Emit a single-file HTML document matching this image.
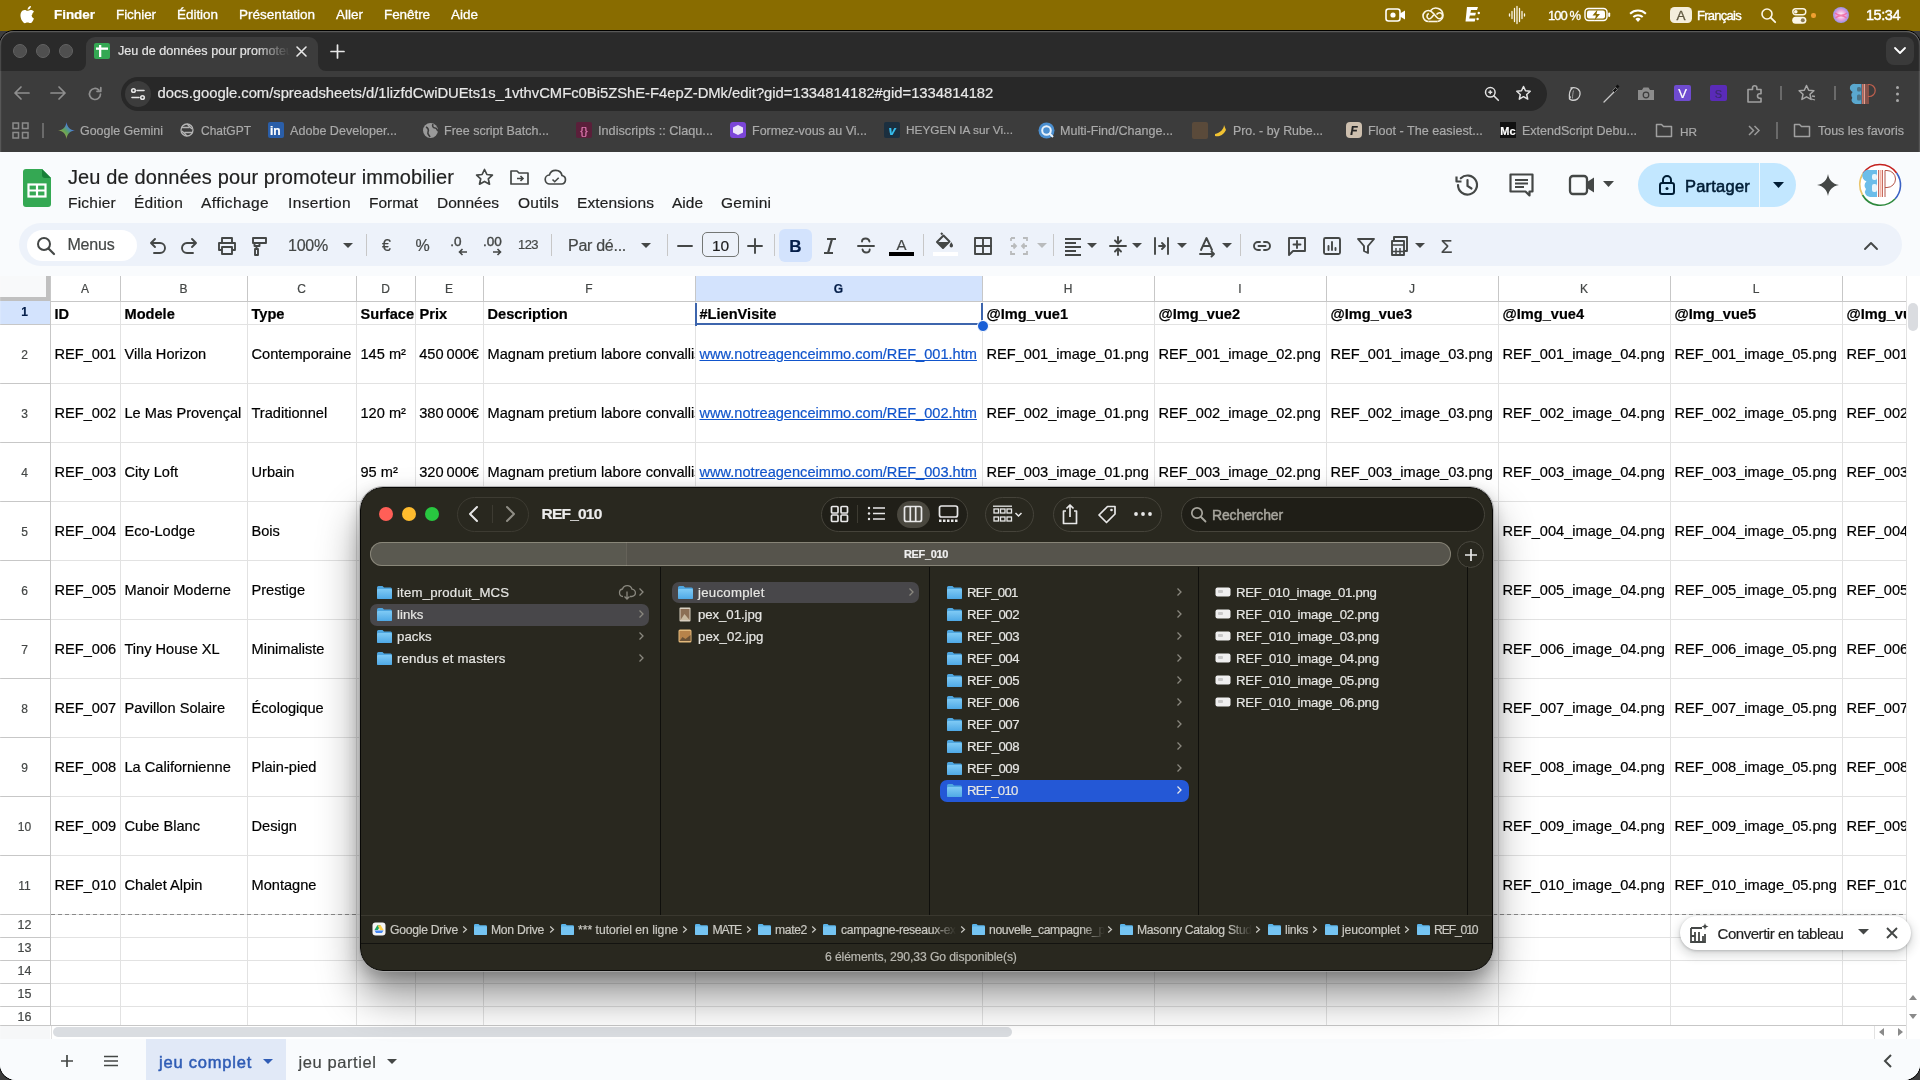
<!DOCTYPE html><html><head><meta charset="utf-8"><style>
html,body{margin:0;padding:0;width:1920px;height:1080px;overflow:hidden;background:#3d3d3d;}
body{position:relative;font-family:"Liberation Sans",sans-serif;will-change:transform;}
div{-webkit-text-stroke-width:0.2px;}
div,svg{position:absolute;}
svg{overflow:visible;}
</style></head><body>
<div style="left:0px;top:0px;width:1920px;height:31px;background:#896c00;"></div>
<svg style="left:19px;top:5px;" width="16" height="19" viewBox="0 0 16 19"><path fill="#fff" d="M13.1 10.1c0-2.2 1.8-3.3 1.9-3.4-1-1.5-2.6-1.7-3.2-1.7-1.4-.1-2.6.8-3.3.8-.7 0-1.7-.8-2.8-.8C4.3 5 2.9 5.9 2.2 7.2.7 9.9 1.8 13.8 3.3 16c.7 1 1.5 2.2 2.6 2.2 1 0 1.4-.7 2.7-.7 1.2 0 1.6.7 2.7.6 1.1 0 1.8-1 2.5-2.1.8-1.2 1.1-2.3 1.1-2.4 0 0-2.2-.8-2.3-3.5zM11 3.6c.6-.7 1-1.7.9-2.6-.8 0-1.8.5-2.4 1.2-.5.6-1 1.6-.9 2.5.9.1 1.8-.4 2.4-1.1z"/></svg>
<div style="left:54.00px;top:8.07px;font-size:13.50px;line-height:13.50px;color:#ffffff;white-space:pre;font-weight:bold;letter-spacing:-0.042px;">Finder</div>
<div style="left:116.00px;top:8.07px;font-size:13.50px;line-height:13.50px;color:#ffffff;white-space:pre;letter-spacing:-0.073px;-webkit-text-stroke:0.3px #fff;">Fichier</div>
<div style="left:177.00px;top:8.07px;font-size:13.50px;line-height:13.50px;color:#ffffff;white-space:pre;letter-spacing:-0.040px;-webkit-text-stroke:0.3px #fff;">Édition</div>
<div style="left:239.00px;top:8.07px;font-size:13.50px;line-height:13.50px;color:#ffffff;white-space:pre;letter-spacing:0.017px;-webkit-text-stroke:0.3px #fff;">Présentation</div>
<div style="left:336.00px;top:8.07px;font-size:13.50px;line-height:13.50px;color:#ffffff;white-space:pre;letter-spacing:-0.002px;-webkit-text-stroke:0.3px #fff;">Aller</div>
<div style="left:384.00px;top:8.07px;font-size:13.50px;line-height:13.50px;color:#ffffff;white-space:pre;letter-spacing:-0.075px;-webkit-text-stroke:0.3px #fff;">Fenêtre</div>
<div style="left:451.00px;top:8.07px;font-size:13.50px;line-height:13.50px;color:#ffffff;white-space:pre;letter-spacing:-0.005px;-webkit-text-stroke:0.3px #fff;">Aide</div>
<svg style="left:1385px;top:6px;" width="21" height="18" viewBox="0 0 21 18"><rect x="1" y="3" width="14" height="12" rx="2.5" fill="none" stroke="#fff" stroke-width="1.6"/><circle cx="8" cy="9" r="2.6" fill="#fff"/><path d="M15 7.5l5-3v9l-5-3z" fill="#fff"/></svg>
<svg style="left:1422px;top:5px;" width="22" height="20" viewBox="0 0 22 20"><g fill="none" stroke="#fbf6e6" stroke-width="1.6"><path d="M6.5 16.5a5.5 5.5 0 0 1 0-11c2.2 0 3.6 1.3 5 3l3 3.5c1 1.2 2 1.8 3 1.8a3 3 0 0 0 0-6c-1 0-2 .6-3 1.8"/><path d="M15.5 16.5h-9"/><path d="M6.8 8.5a3 3 0 0 0 0 5.5c1 0 2-.6 3-1.8l2-2.4"/><path d="M8.5 5.8A7 7 0 0 1 21 10a6.5 6.5 0 0 1-5.5 6.5"/></g></svg>
<svg style="left:1463px;top:4px;" width="18" height="22" viewBox="0 0 18 22"><path fill="#fff" d="M4 3h11l-1 3H8l-.6 2.8h5.5l-.7 2.7H6.9l-.7 3h6.3l-.8 3H2.5z"/><circle cx="15.8" cy="9" r="1.2" fill="#fff"/><circle cx="14.6" cy="15" r="1.2" fill="#fff"/></svg>
<svg style="left:1508px;top:5px;" width="18" height="20" viewBox="0 0 18 20"><g stroke="#fbf6e6" stroke-width="1.3" stroke-linecap="round"><path d="M1.5 9v2M4 6.5v7M6.5 3.5v13M9 1.5v17M11.5 3.5v13M14 6.5v7M16.5 9v2"/></g></svg>
<div style="left:1548.00px;top:8.50px;font-size:13.00px;line-height:13.00px;color:#ffffff;white-space:pre;letter-spacing:-0.972px;-webkit-text-stroke:0.3px #fff;">100 %</div>
<svg style="left:1584px;top:7px;" width="28" height="16" viewBox="0 0 28 16"><rect x="1" y="1.5" width="22" height="12" rx="3.5" fill="none" stroke="#fff" stroke-width="1.4"/><rect x="24.2" y="5.5" width="2" height="4.5" rx="1" fill="#fff"/><rect x="3" y="3.5" width="18" height="8" rx="2" fill="#fff"/><path d="M13.5 2.5l-5 6h3.5l-1.5 5 5.5-6.5h-3.5z" fill="#896c00"/></svg>
<svg style="left:1627px;top:6px;" width="22" height="17" viewBox="0 0 22 17"><g fill="#fff"><path d="M11 16l-2.6-3a3.6 3.6 0 0 1 5.2 0z"/><path d="M5.6 10.3a7.8 7.8 0 0 1 10.8 0l-1.4 1.5a5.7 5.7 0 0 0-8 0z"/><path d="M2.4 6.9a12.5 12.5 0 0 1 17.2 0l-1.4 1.5a10.4 10.4 0 0 0-14.4 0z"/></g></svg>
<div style="left:1670px;top:7px;width:22px;height:16px;background:#f4eedc;border-radius:4.5px;"></div>
<div style="left:1676.50px;top:8.87px;font-size:13.50px;line-height:13.50px;color:#5e573f;white-space:pre;-webkit-text-stroke:0.3px #5e573f;">A</div>
<div style="left:1697.00px;top:8.50px;font-size:13.00px;line-height:13.00px;color:#ffffff;white-space:pre;letter-spacing:-0.731px;-webkit-text-stroke:0.35px #fff;">Français</div>
<svg style="left:1760px;top:7px;" width="17" height="17" viewBox="0 0 17 17"><circle cx="7" cy="7" r="5" fill="none" stroke="#fbf6e6" stroke-width="1.6"/><path d="M10.7 10.7l4.5 4.5" stroke="#fbf6e6" stroke-width="1.8" stroke-linecap="round"/></svg>
<svg style="left:1792px;top:8px;" width="15" height="16" viewBox="0 0 15 16"><rect x="0.8" y="0.8" width="13" height="6" rx="3" fill="none" stroke="#fbf6e6" stroke-width="1.4"/><circle cx="3.8" cy="3.8" r="1.8" fill="#fbf6e6"/><rect x="0.2" y="8.7" width="14.2" height="7" rx="3.5" fill="#fbf6e6"/><circle cx="10.8" cy="12.2" r="2" fill="#8a7a50"/></svg>
<div style="left:1811px;top:13px;width:4.5px;height:4.5px;background:#f0a030;border-radius:50%;"></div>
<svg style="left:1832px;top:6px;" width="18" height="18" viewBox="0 0 18 18"><defs><radialGradient id="sg" cx=".5" cy=".5" r=".6"><stop offset="0" stop-color="#ffffff"/><stop offset=".5" stop-color="#e9a0d8"/><stop offset="1" stop-color="#6d8cf0"/></radialGradient></defs><circle cx="9" cy="9" r="8" fill="url(#sg)"/><path d="M3 7c3 3 9 3 12 0M3.5 12c3-3 8-3 11 0" stroke="#f0609a" stroke-width="1.3" fill="none" opacity=".8"/></svg>
<div style="left:1866.00px;top:7.53px;font-size:14.50px;line-height:14.50px;color:#ffffff;white-space:pre;letter-spacing:-0.457px;-webkit-text-stroke:0.45px #fff;">15:34</div>
<div style="left:0px;top:1040px;width:1920px;height:40px;background:#3d3d3d;"></div>
<div style="left:0px;top:31px;width:1920px;height:1049px;background:#3c3c3c;border-radius:14px 14px 16px 16px;overflow:hidden;box-shadow:0 0 0 1px #000;"></div>
<div style="left:0px;top:31px;width:1920px;height:40px;background:#2a2a2a;border-radius:14px 14px 0 0;"></div>
<div style="left:13px;top:44px;width:14px;height:14px;background:#4f4f4f;border:1px solid #626262;box-sizing:border-box;border-radius:50%;"></div>
<div style="left:36px;top:44px;width:14px;height:14px;background:#4f4f4f;border:1px solid #626262;box-sizing:border-box;border-radius:50%;"></div>
<div style="left:59px;top:44px;width:14px;height:14px;background:#4f4f4f;border:1px solid #626262;box-sizing:border-box;border-radius:50%;"></div>
<div style="left:86px;top:37px;width:232px;height:34px;background:#3c3c3c;border-radius:9px 9px 0 0;"></div>
<svg style="left:78px;top:62px;" width="8" height="9" viewBox="0 0 8 9"><path d="M8 0v9H0A8 8 0 0 0 8 1z" fill="#3c3c3c"/></svg>
<svg style="left:318px;top:62px;" width="8" height="9" viewBox="0 0 8 9"><path d="M0 0v9h8A8 8 0 0 1 0 1z" fill="#3c3c3c"/></svg>
<svg style="left:94px;top:43px;" width="16" height="16" viewBox="0 0 16 16"><rect x="0" y="0" width="16" height="16" rx="2" fill="#34a853"/><rect x="2" y="4.5" width="12" height="2.3" fill="#fff"/><rect x="5" y="2" width="2.3" height="12" fill="#fff"/></svg>
<div style="left:118px;top:40px;width:172px;height:24px;overflow:hidden;-webkit-mask-image:linear-gradient(90deg,#000 80%,transparent 100%);"><div style="left:0;top:5.33px;font-size:12.6px;line-height:12.6px;color:#e3e3e3;white-space:pre;">Jeu de données pour promoteur immobilier</div></div>
<svg style="left:295px;top:45px;" width="13" height="13" viewBox="0 0 13 13"><path d="M2 2l9 9M11 2l-9 9" stroke="#e8e8e8" stroke-width="1.6" stroke-linecap="round"/></svg>
<svg style="left:330px;top:44px;" width="15" height="15" viewBox="0 0 15 15"><path d="M7.5 1v13M1 7.5h13" stroke="#e8e8e8" stroke-width="1.7" stroke-linecap="round"/></svg>
<div style="left:1886px;top:37px;width:28px;height:28px;background:#3a3a3a;border-radius:8px;"></div>
<svg style="left:1893px;top:46px;" width="14" height="9" viewBox="0 0 14 9"><path d="M2 2l5 5 5-5" stroke="#fff" stroke-width="1.8" fill="none" stroke-linecap="round" stroke-linejoin="round"/></svg>
<svg style="left:12px;top:84px;" width="20" height="18" viewBox="0 0 20 18"><path d="M17 9H3M9 3L3 9l6 6" stroke="#8f8f8f" stroke-width="1.7" fill="none" stroke-linecap="round" stroke-linejoin="round"/></svg>
<svg style="left:48px;top:84px;" width="20" height="18" viewBox="0 0 20 18"><path d="M3 9h14M11 3l6 6-6 6" stroke="#8f8f8f" stroke-width="1.7" fill="none" stroke-linecap="round" stroke-linejoin="round"/></svg>
<svg style="left:85px;top:84px;" width="20" height="20" viewBox="0 0 20 20"><path d="M15.5 10a5.5 5.5 0 1 1-1.6-3.9" stroke="#8f8f8f" stroke-width="1.7" fill="none" stroke-linecap="round"/><path d="M15.8 3.5v3.8H12" stroke="#8f8f8f" stroke-width="1.7" fill="none" stroke-linecap="round" stroke-linejoin="round"/></svg>
<div style="left:121px;top:77px;width:1426px;height:34px;background:#282828;border-radius:17px;"></div>
<div style="left:125px;top:81px;width:26px;height:26px;background:#3c3c3c;border-radius:50%;"></div>
<svg style="left:129px;top:85px;" width="18" height="18" viewBox="0 0 18 18"><g stroke="#e3e3e3" stroke-width="1.6" fill="none" stroke-linecap="round"><path d="M8 5.5h7M3 12.5h7"/><circle cx="4.5" cy="5.5" r="1.8"/><circle cx="13.5" cy="12.5" r="1.8"/></g></svg>
<div style="left:157.50px;top:85.97px;font-size:14.80px;line-height:14.80px;color:#e8e8e8;white-space:pre;letter-spacing:-0.014px;">docs.google.com/spreadsheets/d/1lizfdCwiDUEts1s_1vthvCMFc0Bi5ZShE-F4epZ-DMk/edit?gid=1334814182#gid=1334814182</div>
<svg style="left:1484px;top:86px;" width="16" height="16" viewBox="0 0 16 16"><circle cx="6.3" cy="6.3" r="4.8" stroke="#e3e3e3" stroke-width="1.5" fill="none"/><path d="M9.8 9.8l4.5 4.5" stroke="#e3e3e3" stroke-width="1.6" stroke-linecap="round"/><path d="M6.3 4.3v4M4.3 6.3h4" stroke="#e3e3e3" stroke-width="1.5"/></svg>
<svg style="left:1515px;top:85px;" width="17" height="17" viewBox="0 0 17 17"><path d="M8.5 1.5l2 4.3 4.7.5-3.5 3.2 1 4.6-4.2-2.4-4.2 2.4 1-4.6-3.5-3.2 4.7-.5z" stroke="#e3e3e3" stroke-width="1.5" fill="none" stroke-linejoin="round"/></svg>
<svg style="left:1566px;top:86px;" width="16" height="15" viewBox="0 0 16 15"><path d="M6 2.5C4 4 3 8 3.5 13M5 2c6-1.5 9.5 2 9 6.5-.5 4-4 6.5-8.5 5.5-2-.5-2.5-2-1-3" stroke="#d0d0d0" stroke-width="1.3" fill="none" stroke-linecap="round"/><path d="M7.5 4.5c-.5 2-1 5-1 8" stroke="#9a9a9a" stroke-width="1" fill="none"/></svg>
<svg style="left:1601px;top:83px;" width="20" height="21" viewBox="0 0 20 21"><path d="M3 19l9.5-9.5" stroke="#c8c8c8" stroke-width="1.3" stroke-linecap="round"/><path d="M11.5 7.5l3-3 2 2-3 3z" fill="#151515" stroke="#8a8a8a" stroke-width=".8"/><path d="M14.5 3.5l2-2 2 2-2 2z" fill="#101010"/></svg>
<svg style="left:1635px;top:84px;" width="22" height="19" viewBox="0 0 22 19"><path d="M3 6h4l1.5-2.5h5L15 6h4v10H3z" fill="#8c8c8c"/><circle cx="11" cy="11" r="3.4" fill="#3c3c3c"/><circle cx="11" cy="11" r="2.2" fill="#8c8c8c"/></svg>
<div style="left:1674px;top:85px;width:17px;height:16px;background:#6f4bd0;border-radius:2px;"></div>
<div style="left:1678.16px;top:87.00px;font-size:13.00px;line-height:13.00px;color:#fff;white-space:pre;">V</div>
<div style="left:1710px;top:85px;width:17px;height:16px;background:#5a2bb8;border-radius:2px;"></div>
<div style="left:1714.83px;top:88.69px;font-size:11.00px;line-height:11.00px;color:#3c2a70;white-space:pre;">S</div>
<svg style="left:1745px;top:84px;" width="20" height="20" viewBox="0 0 20 20"><path d="M3 5.5h4.5V4a2.2 2.2 0 0 1 4.4 0v1.5H16v4.3h-1.3a2.2 2.2 0 0 0 0 4.4H16V18H3z" stroke="#a0a0a0" stroke-width="1.6" fill="none" stroke-linejoin="round"/></svg>
<div style="left:1780px;top:86px;width:2px;height:14px;background:#6a6a6a;"></div>
<svg style="left:1797px;top:83px;" width="22" height="21" viewBox="0 0 22 21"><path d="M9.5 2.5l2.2 4.8 5.2.5-3.9 3.5 1.1 5.1-4.6-2.6-4.6 2.6 1.1-5.1-3.9-3.5 5.2-.5z" stroke="#a8a8a8" stroke-width="1.5" fill="none" stroke-linejoin="round"/><path d="M15 13l3 .5M14.5 16l3.5 1" stroke="#a8a8a8" stroke-width="1.3"/></svg>
<div style="left:1834px;top:86px;width:2px;height:14px;background:#6a6a6a;"></div>
<svg style="left:1850px;top:83px;" width="26" height="22" viewBox="0 0 26 22"><path d="M5.5 1h6v20h-6a4 4 0 0 1-3.2-6.3 4 4 0 0 1 .4-5.7A4 4 0 0 1 5.5 1z" fill="#5aa8cf"/><rect x="7" y="4" width="4" height="4.5" rx="1.5" fill="#3c3c3c" opacity=".5"/><rect x="7" y="11.5" width="4" height="6" rx="1.5" fill="#3c3c3c" opacity=".5"/><rect x="12" y="1" width="1" height="20" fill="#c76b5e"/><rect x="13.5" y="1" width="1.5" height="20" fill="#e8a090"/><rect x="15.5" y="1" width="1" height="20" fill="#c76b5e"/><path d="M18 21V1.5h1.2a6 6 0 0 1 0 12H18" stroke="#c0604e" stroke-width="1.2" fill="none"/></svg>
<svg style="left:1893px;top:85px;" width="9" height="18" viewBox="0 0 9 18"><circle cx="4.5" cy="2.5" r="1.5" fill="#a8a8a8"/><circle cx="4.5" cy="9" r="1.5" fill="#a8a8a8"/><circle cx="4.5" cy="15.5" r="1.5" fill="#a8a8a8"/></svg>
<svg style="left:12px;top:122px;" width="17" height="17" viewBox="0 0 17 17"><g fill="none" stroke="#8a8a8a" stroke-width="1.5"><rect x="1" y="1" width="5.5" height="5.5"/><rect x="10.5" y="1" width="5.5" height="5.5"/><rect x="1" y="10.5" width="5.5" height="5.5"/><rect x="10.5" y="10.5" width="5.5" height="5.5"/></g></svg>
<div style="left:42px;top:123px;width:2px;height:15px;background:#6a6a6a;"></div>
<svg style="left:58px;top:122px;" width="17" height="17" viewBox="0 0 17 17"><defs><linearGradient id="gg" x1="0" y1="1" x2="1" y2="0"><stop offset="0" stop-color="#e9a23b"/><stop offset=".45" stop-color="#5fa55a"/><stop offset=".7" stop-color="#4a7fe0"/><stop offset="1" stop-color="#d85a7f"/></linearGradient></defs><path d="M8.5 0C9 5 12 8 17 8.5 12 9 9 12 8.5 17 8 12 5 9 0 8.5 5 8 8 5 8.5 0z" fill="url(#gg)"/></svg>
<div style="left:80.00px;top:124.97px;font-size:12.44px;line-height:12.44px;color:#aaaaaa;white-space:pre;">Google Gemini</div>
<svg style="left:179px;top:122px;" width="16" height="16" viewBox="0 0 16 16"><g fill="none" stroke="#b4b4b4" stroke-width="1.3"><circle cx="8" cy="8" r="6"/><path d="M8 2l5 5M8 14l-5-5M2.5 5.5l8 0M13.5 10.5h-8"/></g></svg>
<div style="left:201.00px;top:125.35px;font-size:12.00px;line-height:12.00px;color:#aaaaaa;white-space:pre;">ChatGPT</div>
<div style="left:268px;top:122px;width:16px;height:16px;background:#2a5ea8;border-radius:2px;"></div>
<div style="left:270.00px;top:124.84px;font-size:12.00px;line-height:12.00px;color:#fff;white-space:pre;font-weight:bold;">in</div>
<div style="left:290.00px;top:124.85px;font-size:12.58px;line-height:12.58px;color:#aaaaaa;white-space:pre;">Adobe Developer...</div>
<svg style="left:422px;top:122px;" width="17" height="17" viewBox="0 0 17 17"><circle cx="8.5" cy="8.5" r="7.5" fill="#9a9a9a"/><path d="M4 5c2 1 3 3 2 5s1 3 2 5M11 2c-1 2 0 4 2 4s2 2 3 3" stroke="#3c3c3c" stroke-width="1.6" fill="none"/></svg>
<div style="left:444.00px;top:124.91px;font-size:12.51px;line-height:12.51px;color:#aaaaaa;white-space:pre;">Free script Batch...</div>
<div style="left:576px;top:122px;width:16px;height:16px;background:#5a1f3a;border-radius:2px;"></div>
<div style="left:580.33px;top:125.69px;font-size:11.00px;line-height:11.00px;color:#e57bb5;white-space:pre;">{}</div>
<div style="left:598.00px;top:124.75px;font-size:12.69px;line-height:12.69px;color:#aaaaaa;white-space:pre;">Indiscripts :: Claqu...</div>
<div style="left:730px;top:122px;width:16px;height:16px;background:#7b45d8;border-radius:3px;"></div>
<svg style="left:733px;top:125px;" width="10" height="10" viewBox="0 0 10 10"><path d="M5 0l5 2.5v5L5 10 0 7.5v-5z" fill="#fff" opacity=".85"/></svg>
<div style="left:752.00px;top:124.93px;font-size:12.49px;line-height:12.49px;color:#aaaaaa;white-space:pre;">Formez-vous au Vi...</div>
<div style="left:884px;top:122px;width:16px;height:16px;background:#1b2f3f;border-radius:2px;"></div>
<div style="left:888.38px;top:124.00px;font-size:13.00px;line-height:13.00px;color:#37c0f0;white-space:pre;font-weight:bold;font-style:italic;">v</div>
<div style="left:906.00px;top:125.48px;font-size:11.84px;line-height:11.84px;color:#aaaaaa;white-space:pre;">HEYGEN IA sur Vi...</div>
<svg style="left:1038px;top:122px;" width="17" height="17" viewBox="0 0 17 17"><circle cx="8.5" cy="8.5" r="8" fill="#4b8fd0"/><circle cx="8.5" cy="8.5" r="4.3" fill="none" stroke="#e8f2fb" stroke-width="2"/><path d="M11 11l4 4" stroke="#e8f2fb" stroke-width="2"/></svg>
<div style="left:1060.00px;top:124.88px;font-size:12.55px;line-height:12.55px;color:#aaaaaa;white-space:pre;">Multi-Find/Change...</div>
<div style="left:1192px;top:122px;width:16px;height:17px;background:#5a4a3a;border-radius:2px;"></div>
<svg style="left:1212px;top:122px;" width="17" height="17" viewBox="0 0 17 17"><path d="M3 14c3 1 8 0 11-6l-2-5c0 4-4 8-9 9z" fill="#f1c232"/></svg>
<div style="left:1233.00px;top:125.04px;font-size:12.36px;line-height:12.36px;color:#aaaaaa;white-space:pre;">Pro. - by Rube...</div>
<div style="left:1346px;top:122px;width:16px;height:16px;background:#cdbfae;border-radius:4px;"></div>
<div style="left:1350.33px;top:124.84px;font-size:12.00px;line-height:12.00px;color:#222;white-space:pre;font-weight:bold;font-style:italic;">F</div>
<div style="left:1368.00px;top:124.80px;font-size:12.64px;line-height:12.64px;color:#aaaaaa;white-space:pre;">Floot - The easiest...</div>
<div style="left:1500px;top:122px;width:16px;height:16px;background:#111;"></div>
<div style="left:1500.36px;top:125.69px;font-size:11.00px;line-height:11.00px;color:#fff;white-space:pre;font-weight:bold;font-family:"Liberation Serif",serif;">Mc</div>
<div style="left:1522.00px;top:124.89px;font-size:12.54px;line-height:12.54px;color:#aaaaaa;white-space:pre;">ExtendScript Debu...</div>
<svg style="left:1655px;top:122px;" width="18" height="16" viewBox="0 0 18 16"><path d="M1.5 2.5h5l2 2h8v10h-15z" fill="none" stroke="#a0a0a0" stroke-width="1.5" stroke-linejoin="round"/></svg>
<div style="left:1680.00px;top:125.54px;font-size:11.77px;line-height:11.77px;color:#aaaaaa;white-space:pre;">HR</div>
<svg style="left:1747px;top:124px;" width="14" height="13" viewBox="0 0 14 13"><path d="M2 2l4.5 4.5L2 11M7.5 2l4.5 4.5L7.5 11" stroke="#9a9a9a" stroke-width="1.5" fill="none"/></svg>
<div style="left:1776px;top:122px;width:2px;height:17px;background:#6a6a6a;"></div>
<svg style="left:1793px;top:122px;" width="18" height="16" viewBox="0 0 18 16"><path d="M1.5 2.5h5l2 2h8v10h-15z" fill="none" stroke="#a0a0a0" stroke-width="1.5" stroke-linejoin="round"/></svg>
<div style="left:1818.00px;top:124.94px;font-size:12.48px;line-height:12.48px;color:#aaaaaa;white-space:pre;">Tous les favoris</div>
<div style="left:0px;top:152px;width:1920px;height:928px;background:#f9fbfd;border-radius:0 0 16px 16px;"></div>
<svg style="left:23px;top:169px;" width="28" height="38" viewBox="0 0 28 38"><path d="M3 0h16l9 9v26a3 3 0 0 1-3 3H3a3 3 0 0 1-3-3V3a3 3 0 0 1 3-3z" fill="#34a853"/><path d="M19 0l9 9h-6a3 3 0 0 1-3-3z" fill="#188038"/><rect x="5.5" y="15.5" width="17" height="12" fill="none" stroke="#fff" stroke-width="2.2"/><path d="M5.5 21.5h17M14 15.5v12" stroke="#fff" stroke-width="2.2"/></svg>
<div style="left:68.00px;top:166.57px;font-size:20.00px;line-height:20.00px;color:#1f1f1f;white-space:pre;letter-spacing:0.117px;-webkit-text-stroke:0.2px #1f1f1f;">Jeu de données pour promoteur immobilier</div>
<svg style="left:474px;top:167px;" width="21" height="21" viewBox="0 0 21 21"><path d="M10.5 2.5l2.4 5 5.5.6-4.1 3.7 1.2 5.4-5-2.8-5 2.8 1.2-5.4-4.1-3.7 5.5-.6z" stroke="#444746" stroke-width="1.7" fill="none" stroke-linejoin="round"/></svg>
<svg style="left:509px;top:168px;" width="21" height="19" viewBox="0 0 21 19"><path d="M2 3h6l2 2h9v11H2z" fill="none" stroke="#444746" stroke-width="1.7" stroke-linejoin="round"/><path d="M8 10.5h6M11.5 8l2.5 2.5-2.5 2.5" stroke="#444746" stroke-width="1.6" fill="none"/></svg>
<svg style="left:544px;top:169px;" width="23" height="17" viewBox="0 0 23 17"><path d="M6 15a4.5 4.5 0 0 1-.6-9A6.5 6.5 0 0 1 18 6.5 4.3 4.3 0 0 1 17.5 15z" fill="none" stroke="#444746" stroke-width="1.7" stroke-linejoin="round"/><path d="M8.5 10.5l2.2 2.2 4-4" stroke="#444746" stroke-width="1.6" fill="none"/></svg>
<div style="left:68.00px;top:195.38px;font-size:15.50px;line-height:15.50px;color:#1f1f1f;white-space:pre;letter-spacing:0.213px;">Fichier</div>
<div style="left:134.00px;top:195.38px;font-size:15.50px;line-height:15.50px;color:#1f1f1f;white-space:pre;letter-spacing:0.229px;">Édition</div>
<div style="left:201.00px;top:195.38px;font-size:15.50px;line-height:15.50px;color:#1f1f1f;white-space:pre;letter-spacing:0.406px;">Affichage</div>
<div style="left:288.00px;top:195.38px;font-size:15.50px;line-height:15.50px;color:#1f1f1f;white-space:pre;letter-spacing:0.394px;">Insertion</div>
<div style="left:369.00px;top:195.38px;font-size:15.50px;line-height:15.50px;color:#1f1f1f;white-space:pre;letter-spacing:-0.015px;">Format</div>
<div style="left:437.00px;top:195.38px;font-size:15.50px;line-height:15.50px;color:#1f1f1f;white-space:pre;letter-spacing:-0.007px;">Données</div>
<div style="left:518.00px;top:195.38px;font-size:15.50px;line-height:15.50px;color:#1f1f1f;white-space:pre;letter-spacing:0.230px;">Outils</div>
<div style="left:577.00px;top:195.38px;font-size:15.50px;line-height:15.50px;color:#1f1f1f;white-space:pre;letter-spacing:0.118px;">Extensions</div>
<div style="left:672.00px;top:195.38px;font-size:15.50px;line-height:15.50px;color:#1f1f1f;white-space:pre;letter-spacing:-0.006px;">Aide</div>
<div style="left:721.00px;top:195.38px;font-size:15.50px;line-height:15.50px;color:#1f1f1f;white-space:pre;letter-spacing:0.150px;">Gemini</div>
<svg style="left:1453px;top:171px;" width="29" height="28" viewBox="0 0 29 28"><path d="M5 14a9.5 9.5 0 1 0 2.8-6.7" stroke="#444746" stroke-width="2.2" fill="none" stroke-linecap="round"/><path d="M3.5 5.5v5h5" stroke="#444746" stroke-width="2.2" fill="none" stroke-linejoin="round"/><path d="M14.5 9v6l4 2.5" stroke="#444746" stroke-width="2.2" fill="none" stroke-linecap="round"/></svg>
<svg style="left:1508px;top:172px;" width="27" height="26" viewBox="0 0 27 26"><path d="M2.5 2.5h22v17h-3v4l-4-4h-15z" fill="none" stroke="#444746" stroke-width="2.2" stroke-linejoin="round"/><path d="M7 8h13M7 11.5h13M7 15h9" stroke="#444746" stroke-width="2"/></svg>
<svg style="left:1568px;top:173px;" width="29" height="24" viewBox="0 0 29 24"><rect x="2" y="3" width="17" height="18" rx="3" fill="none" stroke="#444746" stroke-width="2.3"/><path d="M19 9l7-4.5v15L19 15z" fill="#444746"/></svg>
<svg style="left:1603px;top:181px;" width="12" height="7" viewBox="0 0 12 7"><path d="M0 0h11l-5.5 6z" fill="#444746"/></svg>
<div style="left:1638px;top:163px;width:158px;height:44px;background:#c2e7ff;border-radius:22px;"></div>
<div style="left:1759px;top:163px;width:1.2px;height:44px;background:#f9fbfd;opacity:.9;"></div>
<svg style="left:1658px;top:174px;" width="18" height="22" viewBox="0 0 18 22"><rect x="2" y="9" width="14" height="11" rx="2" fill="none" stroke="#001d35" stroke-width="2"/><path d="M5 9V6a4 4 0 0 1 8 0v3" fill="none" stroke="#001d35" stroke-width="2"/><circle cx="9" cy="14.5" r="1.5" fill="#001d35"/></svg>
<div style="left:1685.00px;top:177.53px;font-size:16.50px;line-height:16.50px;color:#001d35;white-space:pre;letter-spacing:0.214px;-webkit-text-stroke:0.55px #001d35;">Partager</div>
<svg style="left:1773px;top:182px;" width="12" height="7" viewBox="0 0 12 7"><path d="M0 0h11l-5.5 6z" fill="#001d35"/></svg>
<svg style="left:1817px;top:174px;" width="22" height="22" viewBox="0 0 22 22"><path d="M11 0C11.8 5.8 15.5 10 22 11 15.5 12 11.8 16.2 11 22 10.2 16.2 6.5 12 0 11 6.5 10 10.2 5.8 11 0z" fill="#444746"/></svg>
<svg style="left:1858px;top:163px;" width="44" height="44" viewBox="0 0 44 44"><circle cx="22" cy="22" r="20.5" fill="#fff"/><path d="M5.2 10.2A20.5 20.5 0 0 1 38.6 10" stroke="#c5221f" stroke-width="1.6" fill="none"/><path d="M38.6 10A20.5 20.5 0 0 1 37 36" stroke="#3b62c4" stroke-width="1.6" fill="none"/><path d="M37 36A20.5 20.5 0 0 1 4.5 32" stroke="#2f8a3e" stroke-width="1.6" fill="none"/><path d="M4.5 32A20.5 20.5 0 0 1 5.2 10.2" stroke="#e9c46a" stroke-width="1.6" fill="none"/><path d="M12 7h7v27h-7a5 5 0 0 1-4-8 5 5 0 0 1 .5-7.5A5 5 0 0 1 12 7z" fill="#6cbde9"/><rect x="14" y="11" width="5" height="6" rx="2" fill="#e8f5fc"/><rect x="14" y="21" width="5" height="8" rx="2" fill="#e8f5fc"/><rect x="20" y="7" width="1" height="27" fill="#c76b5e"/><rect x="21.5" y="7" width="2" height="27" fill="#f4b6a8"/><rect x="24" y="7" width="1" height="27" fill="#c76b5e"/><path d="M27 34V7.5h2a8.5 8.5 0 0 1 0 17h-2" stroke="#b5574a" stroke-width="1" fill="none"/></svg>
<div style="left:19px;top:223px;width:1883px;height:43px;background:#edf2fa;border-radius:22px;"></div>
<div style="left:27px;top:230px;width:110px;height:31px;background:#fff;border-radius:16px;"></div>
<svg style="left:36px;top:236px;" width="20" height="20" viewBox="0 0 20 20"><circle cx="8" cy="8" r="6" stroke="#444746" stroke-width="2" fill="none"/><path d="M12.5 12.5l5.5 5.5" stroke="#444746" stroke-width="2.2" stroke-linecap="round"/></svg>
<div style="left:67.50px;top:237.46px;font-size:16.00px;line-height:16.00px;color:#444746;white-space:pre;letter-spacing:-0.205px;">Menus</div>
<svg style="left:145.5px;top:235.0px;" width="22" height="22" viewBox="0 0 22 22"><path d="M6 8h8a5 5 0 0 1 0 10H8" stroke="#444746" stroke-width="1.9" fill="none" stroke-linecap="round" stroke-linejoin="round"/><path d="M9 4L5 8l4 4" stroke="#444746" stroke-width="1.9" fill="none" stroke-linecap="round" stroke-linejoin="round"/></svg>
<svg style="left:179.0px;top:235.0px;" width="22" height="22" viewBox="0 0 22 22"><path d="M16 8H8a5 5 0 0 0 0 10h6" stroke="#444746" stroke-width="1.9" fill="none" stroke-linecap="round" stroke-linejoin="round"/><path d="M13 4l4 4-4 4" stroke="#444746" stroke-width="1.9" fill="none" stroke-linecap="round" stroke-linejoin="round"/></svg>
<svg style="left:215.5px;top:235.0px;" width="22" height="22" viewBox="0 0 22 22"><path d="M6 7V3h10v4M6 15H3V8h16v7h-3M6 12h10v7H6z" stroke="#444746" stroke-width="1.9" fill="none" stroke-linecap="round" stroke-linejoin="round"/></svg>
<svg style="left:249.0px;top:235.0px;" width="22" height="22" viewBox="0 0 22 22"><path d="M4 3h13v5H4zM10.5 8v3h-5V8M7.5 11v3" stroke="#444746" stroke-width="1.9" fill="none" stroke-linecap="round" stroke-linejoin="round"/><rect x="6" y="14" width="3" height="6" stroke="#444746" stroke-width="1.9" fill="none" stroke-linecap="round" stroke-linejoin="round"/></svg>
<div style="left:288.00px;top:238.46px;font-size:16.00px;line-height:16.00px;color:#444746;white-space:pre;letter-spacing:-0.231px;">100%</div>
<svg style="left:343px;top:243px;" width="10" height="6" viewBox="0 0 10 6"><path d="M0 0h10L5 5z" fill="#444746"/></svg>
<div style="left:366px;top:234px;width:1px;height:22px;background:#c7c7c7;"></div>
<div style="left:382.05px;top:238.46px;font-size:16.00px;line-height:16.00px;color:#444746;white-space:pre;">€</div>
<div style="left:415.39px;top:238.46px;font-size:16.00px;line-height:16.00px;color:#444746;white-space:pre;">%</div>
<div style="left:450.37px;top:234.57px;font-size:13.50px;line-height:13.50px;color:#444746;white-space:pre;-webkit-text-stroke:0.4px #444746;">.0</div>
<svg style="left:458px;top:247.5px;" width="10" height="8" viewBox="0 0 10 8"><path d="M9 4H1.5M4.5 1L1.5 4l3 3" stroke="#444746" stroke-width="1.6" fill="none"/></svg>
<div style="left:483.12px;top:234.57px;font-size:13.50px;line-height:13.50px;color:#444746;white-space:pre;-webkit-text-stroke:0.4px #444746;">.00</div>
<svg style="left:492px;top:247.5px;" width="10" height="8" viewBox="0 0 10 8"><path d="M1 4h7.5M5.5 1l3 3-3 3" stroke="#444746" stroke-width="1.6" fill="none"/></svg>
<div style="left:518.00px;top:238.00px;font-size:13.00px;line-height:13.00px;color:#444746;white-space:pre;letter-spacing:-0.564px;">123</div>
<div style="left:551px;top:234px;width:1px;height:22px;background:#c7c7c7;"></div>
<div style="left:568.00px;top:238.46px;font-size:16.00px;line-height:16.00px;color:#444746;white-space:pre;letter-spacing:-0.275px;">Par dé...</div>
<svg style="left:641px;top:243px;" width="10" height="6" viewBox="0 0 10 6"><path d="M0 0h10L5 5z" fill="#444746"/></svg>
<div style="left:667px;top:234px;width:1px;height:22px;background:#c7c7c7;"></div>
<svg style="left:674.0px;top:235.0px;" width="22" height="22" viewBox="0 0 22 22"><path d="M4 11h14" stroke="#444746" stroke-width="1.9" fill="none" stroke-linecap="round" stroke-linejoin="round"/></svg>
<div style="left:702px;top:232px;width:37px;height:25px;border:1.3px solid #747775;border-radius:5px;box-sizing:border-box;"></div>
<div style="left:711.88px;top:238.38px;font-size:15.50px;line-height:15.50px;color:#1f1f1f;white-space:pre;">10</div>
<svg style="left:744.0px;top:235.0px;" width="22" height="22" viewBox="0 0 22 22"><path d="M4 11h14M11 4v14" stroke="#444746" stroke-width="1.9" fill="none" stroke-linecap="round" stroke-linejoin="round"/></svg>
<div style="left:774px;top:234px;width:1px;height:22px;background:#c7c7c7;"></div>
<div style="left:779px;top:229px;width:33px;height:33px;background:#d3e3fd;border-radius:6px;"></div>
<div style="left:789.36px;top:238.11px;font-size:17.00px;line-height:17.00px;color:#041e49;white-space:pre;font-weight:bold;">B</div>
<svg style="left:819.0px;top:235.0px;" width="22" height="22" viewBox="0 0 22 22"><path d="M8 4h9M5 18h9M13 4L9 18" stroke="#444746" stroke-width="2.2" fill="none"/></svg>
<svg style="left:854.5px;top:235.0px;" width="22" height="22" viewBox="0 0 22 22"><path d="M3 11h16M14.5 6.5c-.5-2-2-3-3.8-3-2.2 0-3.7 1.3-3.7 3M7.5 14.5c.5 2 2 3 3.5 3 2.2 0 3.7-1.3 3.7-3" stroke="#444746" stroke-width="1.9" fill="none" stroke-linecap="round" stroke-linejoin="round"/></svg>
<div style="left:896.50px;top:237.30px;font-size:15.00px;line-height:15.00px;color:#444746;white-space:pre;">A</div>
<div style="left:889px;top:251.5px;width:25px;height:4.5px;background:#000;"></div>
<svg style="left:934.0px;top:231.0px;" width="22" height="22" viewBox="0 0 22 22"><path d="M7 2l1.5 1.5M9.5 4.5L3 11l6 6 6.5-6.5z" stroke="#444746" stroke-width="2" fill="none" stroke-linejoin="round"/><path d="M4 11h11l-6 6z" fill="#444746"/><path d="M19 14.5c0 1.2-.8 2-1.7 2s-1.7-.8-1.7-2 1.7-3.3 1.7-3.3 1.7 2.1 1.7 3.3z" fill="#444746"/></svg>
<div style="left:933px;top:251.5px;width:25px;height:4.5px;background:#fff;"></div>
<svg style="left:971.5px;top:235.0px;" width="22" height="22" viewBox="0 0 22 22"><rect x="3" y="3" width="16" height="16" stroke="#444746" stroke-width="1.9" fill="none" stroke-linecap="round" stroke-linejoin="round" stroke-linecap="butt"/><path d="M11 3v16M3 11h16" stroke="#444746" stroke-width="1.9" fill="none" stroke-linecap="round" stroke-linejoin="round"/></svg>
<div style="left:923px;top:234px;width:1px;height:22px;background:#c7c7c7;"></div>
<svg style="left:1008.0px;top:235.0px;" width="22" height="22" viewBox="0 0 22 22"><g stroke="#b9bbbc" stroke-width="1.8" fill="none"><path d="M3 3v3M3 16v3h4M7 3H3M15 3h4v3M19 16v3h-4M8 11H3M5.5 8.5L8 11l-2.5 2.5M14 11h5M16.5 8.5L14 11l2.5 2.5"/></g></svg>
<svg style="left:1037px;top:243px;" width="10" height="6" viewBox="0 0 10 6"><path d="M0 0h10L5 5z" fill="#b9bbbc"/></svg>
<div style="left:1053px;top:234px;width:1px;height:22px;background:#c7c7c7;"></div>
<svg style="left:1061.5px;top:235.0px;" width="22" height="22" viewBox="0 0 22 22"><path d="M3 4h16M3 8h11M3 12h16M3 16h11M3 20h16" stroke="#444746" stroke-width="1.8"/></svg>
<svg style="left:1087px;top:243px;" width="10" height="6" viewBox="0 0 10 6"><path d="M0 0h10L5 5z" fill="#444746"/></svg>
<svg style="left:1106.5px;top:235.0px;" width="22" height="22" viewBox="0 0 22 22"><path d="M3 11h16M11 2v6M8 5.5l3 3 3-3M11 20v-6M8 16.5l3-3 3 3" stroke="#444746" stroke-width="1.9" fill="none" stroke-linecap="round" stroke-linejoin="round"/></svg>
<svg style="left:1132px;top:243px;" width="10" height="6" viewBox="0 0 10 6"><path d="M0 0h10L5 5z" fill="#444746"/></svg>
<svg style="left:1150.5px;top:235.0px;" width="22" height="22" viewBox="0 0 22 22"><path d="M4 3v16M17 3v16M8 11h6M11 8l3 3-3 3" stroke="#444746" stroke-width="1.9" fill="none" stroke-linecap="round" stroke-linejoin="round"/></svg>
<svg style="left:1177px;top:243px;" width="10" height="6" viewBox="0 0 10 6"><path d="M0 0h10L5 5z" fill="#444746"/></svg>
<svg style="left:1195.5px;top:235.0px;" width="22" height="22" viewBox="0 0 22 22"><path d="M5 15l5.5-12L16 15M7 11h7M4 19h14M15.5 16.5l2.5 2.5-2.5 2.5" stroke="#444746" stroke-width="1.9" fill="none" stroke-linecap="round" stroke-linejoin="round"/></svg>
<svg style="left:1222px;top:243px;" width="10" height="6" viewBox="0 0 10 6"><path d="M0 0h10L5 5z" fill="#444746"/></svg>
<div style="left:1240px;top:234px;width:1px;height:22px;background:#c7c7c7;"></div>
<svg style="left:1250.5px;top:235.0px;" width="22" height="22" viewBox="0 0 22 22"><path d="M9 7H7a4 4 0 0 0 0 8h2M13 7h2a4 4 0 0 1 0 8h-2M7.5 11h7" stroke="#444746" stroke-width="1.9" fill="none" stroke-linecap="round" stroke-linejoin="round"/></svg>
<svg style="left:1285.5px;top:235.0px;" width="22" height="22" viewBox="0 0 22 22"><path d="M3 3h16v13H7l-4 4z" stroke="#444746" stroke-width="1.9" fill="none" stroke-linecap="round" stroke-linejoin="round"/><path d="M11 6v7M7.5 9.5h7" stroke="#444746" stroke-width="1.9" fill="none" stroke-linecap="round" stroke-linejoin="round"/></svg>
<svg style="left:1321.0px;top:235.0px;" width="22" height="22" viewBox="0 0 22 22"><rect x="3" y="3" width="16" height="16" rx="1.5" stroke="#444746" stroke-width="1.9" fill="none" stroke-linecap="round" stroke-linejoin="round"/><path d="M7.5 15v-4M11 15V7M14.5 15v-2" stroke="#444746" stroke-width="1.9" fill="none" stroke-linecap="round" stroke-linejoin="round"/></svg>
<svg style="left:1355.0px;top:235.0px;" width="22" height="22" viewBox="0 0 22 22"><path d="M3 4h16l-6 7v7l-4-2v-5z" stroke="#444746" stroke-width="1.9" fill="none" stroke-linecap="round" stroke-linejoin="round"/></svg>
<svg style="left:1388.5px;top:235.0px;" width="22" height="22" viewBox="0 0 22 22"><path d="M5 5V2h13v14h-3" stroke="#444746" stroke-width="1.9" fill="none" stroke-linecap="round" stroke-linejoin="round"/><rect x="3" y="6" width="12" height="14" stroke="#444746" stroke-width="1.9" fill="none" stroke-linecap="round" stroke-linejoin="round"/><path d="M3 10h12M7 13v7M11 13v7M3 16.5h12" stroke="#444746" stroke-width="1.5"/></svg>
<svg style="left:1415px;top:243px;" width="10" height="6" viewBox="0 0 10 6"><path d="M0 0h10L5 5z" fill="#444746"/></svg>
<div style="left:1440.63px;top:236.92px;font-size:19.00px;line-height:19.00px;color:#444746;white-space:pre;">Σ</div>
<svg style="left:1860.0px;top:235.0px;" width="22" height="22" viewBox="0 0 22 22"><path d="M5 14l6-6 6 6" stroke="#444746" stroke-width="1.9" fill="none" stroke-linecap="round" stroke-linejoin="round"/></svg>
<div style="left:0px;top:276px;width:1906px;height:750px;background:#fff;"></div>
<div style="left:0px;top:276px;width:46px;height:21px;background:#f8f9fa;"></div>
<div style="left:695px;top:276px;width:287px;height:25px;background:#d3e3fd;"></div>
<div style="left:0px;top:301px;width:50px;height:23px;background:#d3e3fd;"></div>
<div style="left:50px;top:276px;width:1px;height:25px;background:#c7c7c7;"></div>
<div style="left:50px;top:301px;width:1px;height:725px;background:#e2e2e2;"></div>
<div style="left:120px;top:276px;width:1px;height:25px;background:#c7c7c7;"></div>
<div style="left:120px;top:301px;width:1px;height:725px;background:#e2e2e2;"></div>
<div style="left:247px;top:276px;width:1px;height:25px;background:#c7c7c7;"></div>
<div style="left:247px;top:301px;width:1px;height:725px;background:#e2e2e2;"></div>
<div style="left:356px;top:276px;width:1px;height:25px;background:#c7c7c7;"></div>
<div style="left:356px;top:301px;width:1px;height:725px;background:#e2e2e2;"></div>
<div style="left:415px;top:276px;width:1px;height:25px;background:#c7c7c7;"></div>
<div style="left:415px;top:301px;width:1px;height:725px;background:#e2e2e2;"></div>
<div style="left:483px;top:276px;width:1px;height:25px;background:#c7c7c7;"></div>
<div style="left:483px;top:301px;width:1px;height:725px;background:#e2e2e2;"></div>
<div style="left:695px;top:276px;width:1px;height:25px;background:#c7c7c7;"></div>
<div style="left:695px;top:301px;width:1px;height:725px;background:#e2e2e2;"></div>
<div style="left:982px;top:276px;width:1px;height:25px;background:#c7c7c7;"></div>
<div style="left:982px;top:301px;width:1px;height:725px;background:#e2e2e2;"></div>
<div style="left:1154px;top:276px;width:1px;height:25px;background:#c7c7c7;"></div>
<div style="left:1154px;top:301px;width:1px;height:725px;background:#e2e2e2;"></div>
<div style="left:1326px;top:276px;width:1px;height:25px;background:#c7c7c7;"></div>
<div style="left:1326px;top:301px;width:1px;height:725px;background:#e2e2e2;"></div>
<div style="left:1498px;top:276px;width:1px;height:25px;background:#c7c7c7;"></div>
<div style="left:1498px;top:301px;width:1px;height:725px;background:#e2e2e2;"></div>
<div style="left:1670px;top:276px;width:1px;height:25px;background:#c7c7c7;"></div>
<div style="left:1670px;top:301px;width:1px;height:725px;background:#e2e2e2;"></div>
<div style="left:1842px;top:276px;width:1px;height:25px;background:#c7c7c7;"></div>
<div style="left:1842px;top:301px;width:1px;height:725px;background:#e2e2e2;"></div>
<div style="left:50px;top:301px;width:1856px;height:1px;background:#c7c7c7;"></div>
<div style="left:51px;top:324px;width:1855px;height:1px;background:#e2e2e2;"></div>
<div style="left:0px;top:324px;width:50px;height:1px;background:#c7c7c7;"></div>
<div style="left:51px;top:383px;width:1855px;height:1px;background:#e2e2e2;"></div>
<div style="left:0px;top:383px;width:50px;height:1px;background:#c7c7c7;"></div>
<div style="left:51px;top:442px;width:1855px;height:1px;background:#e2e2e2;"></div>
<div style="left:0px;top:442px;width:50px;height:1px;background:#c7c7c7;"></div>
<div style="left:51px;top:501px;width:1855px;height:1px;background:#e2e2e2;"></div>
<div style="left:0px;top:501px;width:50px;height:1px;background:#c7c7c7;"></div>
<div style="left:51px;top:560px;width:1855px;height:1px;background:#e2e2e2;"></div>
<div style="left:0px;top:560px;width:50px;height:1px;background:#c7c7c7;"></div>
<div style="left:51px;top:619px;width:1855px;height:1px;background:#e2e2e2;"></div>
<div style="left:0px;top:619px;width:50px;height:1px;background:#c7c7c7;"></div>
<div style="left:51px;top:678px;width:1855px;height:1px;background:#e2e2e2;"></div>
<div style="left:0px;top:678px;width:50px;height:1px;background:#c7c7c7;"></div>
<div style="left:51px;top:737px;width:1855px;height:1px;background:#e2e2e2;"></div>
<div style="left:0px;top:737px;width:50px;height:1px;background:#c7c7c7;"></div>
<div style="left:51px;top:796px;width:1855px;height:1px;background:#e2e2e2;"></div>
<div style="left:0px;top:796px;width:50px;height:1px;background:#c7c7c7;"></div>
<div style="left:51px;top:855px;width:1855px;height:1px;background:#e2e2e2;"></div>
<div style="left:0px;top:855px;width:50px;height:1px;background:#c7c7c7;"></div>
<div style="left:51px;top:914px;width:1855px;height:1px;background:#e2e2e2;"></div>
<div style="left:0px;top:914px;width:50px;height:1px;background:#c7c7c7;"></div>
<div style="left:51px;top:937px;width:1855px;height:1px;background:#e2e2e2;"></div>
<div style="left:0px;top:937px;width:50px;height:1px;background:#c7c7c7;"></div>
<div style="left:51px;top:960px;width:1855px;height:1px;background:#e2e2e2;"></div>
<div style="left:0px;top:960px;width:50px;height:1px;background:#c7c7c7;"></div>
<div style="left:51px;top:983px;width:1855px;height:1px;background:#e2e2e2;"></div>
<div style="left:0px;top:983px;width:50px;height:1px;background:#c7c7c7;"></div>
<div style="left:51px;top:1006px;width:1855px;height:1px;background:#e2e2e2;"></div>
<div style="left:0px;top:1006px;width:50px;height:1px;background:#c7c7c7;"></div>
<div style="left:0px;top:1025px;width:1906px;height:1px;background:#c7c7c7;"></div>
<div style="left:50px;top:276px;width:1px;height:750px;background:#c7c7c7;"></div>
<div style="left:46px;top:276px;width:4px;height:25px;background:#c0c0c0;"></div>
<div style="left:0px;top:297px;width:50px;height:4px;background:#c0c0c0;"></div>
<div style="left:51px;top:913.5px;width:1855px;height:1px;background:repeating-linear-gradient(90deg,#8a8a8a 0 4px,transparent 4px 7px);"></div>
<div style="left:81.00px;top:282.84px;font-size:12.00px;line-height:12.00px;color:#444746;white-space:pre;">A</div>
<div style="left:179.50px;top:282.84px;font-size:12.00px;line-height:12.00px;color:#444746;white-space:pre;">B</div>
<div style="left:297.17px;top:282.84px;font-size:12.00px;line-height:12.00px;color:#444746;white-space:pre;">C</div>
<div style="left:381.17px;top:282.84px;font-size:12.00px;line-height:12.00px;color:#444746;white-space:pre;">D</div>
<div style="left:445.00px;top:282.84px;font-size:12.00px;line-height:12.00px;color:#444746;white-space:pre;">E</div>
<div style="left:585.33px;top:282.84px;font-size:12.00px;line-height:12.00px;color:#444746;white-space:pre;">F</div>
<div style="left:833.83px;top:282.84px;font-size:12.00px;line-height:12.00px;color:#041e49;white-space:pre;font-weight:bold;">G</div>
<div style="left:1063.67px;top:282.84px;font-size:12.00px;line-height:12.00px;color:#444746;white-space:pre;">H</div>
<div style="left:1238.33px;top:282.84px;font-size:12.00px;line-height:12.00px;color:#444746;white-space:pre;">I</div>
<div style="left:1409.00px;top:282.84px;font-size:12.00px;line-height:12.00px;color:#444746;white-space:pre;">J</div>
<div style="left:1580.00px;top:282.84px;font-size:12.00px;line-height:12.00px;color:#444746;white-space:pre;">K</div>
<div style="left:1752.66px;top:282.84px;font-size:12.00px;line-height:12.00px;color:#444746;white-space:pre;">L</div>
<div style="left:21.16px;top:305.84px;font-size:12.00px;line-height:12.00px;color:#041e49;white-space:pre;font-weight:bold;">1</div>
<div style="left:21.16px;top:348.84px;font-size:12.00px;line-height:12.00px;color:#444746;white-space:pre;">2</div>
<div style="left:21.16px;top:407.84px;font-size:12.00px;line-height:12.00px;color:#444746;white-space:pre;">3</div>
<div style="left:21.16px;top:466.84px;font-size:12.00px;line-height:12.00px;color:#444746;white-space:pre;">4</div>
<div style="left:21.16px;top:525.84px;font-size:12.00px;line-height:12.00px;color:#444746;white-space:pre;">5</div>
<div style="left:21.16px;top:584.84px;font-size:12.00px;line-height:12.00px;color:#444746;white-space:pre;">6</div>
<div style="left:21.16px;top:643.84px;font-size:12.00px;line-height:12.00px;color:#444746;white-space:pre;">7</div>
<div style="left:21.16px;top:702.84px;font-size:12.00px;line-height:12.00px;color:#444746;white-space:pre;">8</div>
<div style="left:21.16px;top:761.84px;font-size:12.00px;line-height:12.00px;color:#444746;white-space:pre;">9</div>
<div style="left:17.83px;top:820.84px;font-size:12.00px;line-height:12.00px;color:#444746;white-space:pre;">10</div>
<div style="left:18.27px;top:879.84px;font-size:12.00px;line-height:12.00px;color:#444746;white-space:pre;">11</div>
<div style="left:17.55px;top:918.92px;font-size:12.50px;line-height:12.50px;color:#444746;white-space:pre;">12</div>
<div style="left:17.55px;top:941.92px;font-size:12.50px;line-height:12.50px;color:#444746;white-space:pre;">13</div>
<div style="left:17.55px;top:964.92px;font-size:12.50px;line-height:12.50px;color:#444746;white-space:pre;">14</div>
<div style="left:17.55px;top:987.92px;font-size:12.50px;line-height:12.50px;color:#444746;white-space:pre;">15</div>
<div style="left:17.55px;top:1010.92px;font-size:12.50px;line-height:12.50px;color:#444746;white-space:pre;">16</div>
<div style="left:51px;top:0px;width:69px;height:1080px;overflow:hidden;"><div style="left:3.5px;top:307.44px;font-size:14.6px;line-height:14.6px;color:#000;white-space:pre;font-weight:bold;">ID</div></div>
<div style="left:121px;top:0px;width:126px;height:1080px;overflow:hidden;"><div style="left:3.5px;top:307.44px;font-size:14.6px;line-height:14.6px;color:#000;white-space:pre;font-weight:bold;">Modele</div></div>
<div style="left:248px;top:0px;width:108px;height:1080px;overflow:hidden;"><div style="left:3.5px;top:307.44px;font-size:14.6px;line-height:14.6px;color:#000;white-space:pre;font-weight:bold;">Type</div></div>
<div style="left:357px;top:0px;width:58px;height:1080px;overflow:hidden;"><div style="left:3.5px;top:307.44px;font-size:14.6px;line-height:14.6px;color:#000;white-space:pre;font-weight:bold;">Surface</div></div>
<div style="left:416px;top:0px;width:67px;height:1080px;overflow:hidden;"><div style="left:3.5px;top:307.44px;font-size:14.6px;line-height:14.6px;color:#000;white-space:pre;font-weight:bold;">Prix</div></div>
<div style="left:484px;top:0px;width:211px;height:1080px;overflow:hidden;"><div style="left:3.5px;top:307.44px;font-size:14.6px;line-height:14.6px;color:#000;white-space:pre;font-weight:bold;">Description</div></div>
<div style="left:696px;top:0px;width:286px;height:1080px;overflow:hidden;"><div style="left:3.5px;top:307.44px;font-size:14.6px;line-height:14.6px;color:#000;white-space:pre;font-weight:bold;">#LienVisite</div></div>
<div style="left:983px;top:0px;width:171px;height:1080px;overflow:hidden;"><div style="left:3.5px;top:307.44px;font-size:14.6px;line-height:14.6px;color:#000;white-space:pre;font-weight:bold;">@Img_vue1</div></div>
<div style="left:1155px;top:0px;width:171px;height:1080px;overflow:hidden;"><div style="left:3.5px;top:307.44px;font-size:14.6px;line-height:14.6px;color:#000;white-space:pre;font-weight:bold;">@Img_vue2</div></div>
<div style="left:1327px;top:0px;width:171px;height:1080px;overflow:hidden;"><div style="left:3.5px;top:307.44px;font-size:14.6px;line-height:14.6px;color:#000;white-space:pre;font-weight:bold;">@Img_vue3</div></div>
<div style="left:1499px;top:0px;width:171px;height:1080px;overflow:hidden;"><div style="left:3.5px;top:307.44px;font-size:14.6px;line-height:14.6px;color:#000;white-space:pre;font-weight:bold;">@Img_vue4</div></div>
<div style="left:1671px;top:0px;width:171px;height:1080px;overflow:hidden;"><div style="left:3.5px;top:307.44px;font-size:14.6px;line-height:14.6px;color:#000;white-space:pre;font-weight:bold;">@Img_vue5</div></div>
<div style="left:1843px;top:0px;width:63px;height:1080px;overflow:hidden;"><div style="left:3.5px;top:307.44px;font-size:14.6px;line-height:14.6px;color:#000;white-space:pre;font-weight:bold;">@Img_vue6</div></div>
<div style="left:51px;top:0px;width:69px;height:1080px;overflow:hidden;"><div style="left:3.5px;top:346.64px;font-size:14.6px;line-height:14.6px;color:#000;white-space:pre;">REF_001</div></div>
<div style="left:121px;top:0px;width:126px;height:1080px;overflow:hidden;"><div style="left:3.5px;top:346.64px;font-size:14.6px;line-height:14.6px;color:#000;white-space:pre;">Villa Horizon</div></div>
<div style="left:248px;top:0px;width:108px;height:1080px;overflow:hidden;"><div style="left:3.5px;top:346.64px;font-size:14.6px;line-height:14.6px;color:#000;white-space:pre;">Contemporaine</div></div>
<div style="left:357px;top:0px;width:58px;height:1080px;overflow:hidden;"><div style="left:3.5px;top:346.64px;font-size:14.6px;line-height:14.6px;color:#000;white-space:pre;">145 m²</div></div>
<div style="left:416px;top:0px;width:67px;height:1080px;overflow:hidden;"><div style="right:4px;top:346.64px;font-size:14.6px;line-height:14.6px;color:#000;white-space:pre;">450 000€</div></div>
<div style="left:484px;top:0px;width:211px;height:1080px;overflow:hidden;"><div style="left:3.5px;top:346.64px;font-size:14.6px;line-height:14.6px;color:#000;white-space:pre;">Magnam pretium labore convallis</div></div>
<div style="left:696px;top:0px;width:286px;height:1080px;overflow:hidden;"><div style="left:3.5px;top:346.64px;font-size:14.6px;line-height:14.6px;color:#1155cc;white-space:pre;text-decoration:underline;">www.notreagenceimmo.com/REF_001.htm</div></div>
<div style="left:983px;top:0px;width:171px;height:1080px;overflow:hidden;"><div style="left:3.5px;top:346.64px;font-size:14.6px;line-height:14.6px;color:#000;white-space:pre;">REF_001_image_01.png</div></div>
<div style="left:1155px;top:0px;width:171px;height:1080px;overflow:hidden;"><div style="left:3.5px;top:346.64px;font-size:14.6px;line-height:14.6px;color:#000;white-space:pre;">REF_001_image_02.png</div></div>
<div style="left:1327px;top:0px;width:171px;height:1080px;overflow:hidden;"><div style="left:3.5px;top:346.64px;font-size:14.6px;line-height:14.6px;color:#000;white-space:pre;">REF_001_image_03.png</div></div>
<div style="left:1499px;top:0px;width:171px;height:1080px;overflow:hidden;"><div style="left:3.5px;top:346.64px;font-size:14.6px;line-height:14.6px;color:#000;white-space:pre;">REF_001_image_04.png</div></div>
<div style="left:1671px;top:0px;width:171px;height:1080px;overflow:hidden;"><div style="left:3.5px;top:346.64px;font-size:14.6px;line-height:14.6px;color:#000;white-space:pre;">REF_001_image_05.png</div></div>
<div style="left:1843px;top:0px;width:63px;height:1080px;overflow:hidden;"><div style="left:3.5px;top:346.64px;font-size:14.6px;line-height:14.6px;color:#000;white-space:pre;">REF_001_image_06.png</div></div>
<div style="left:51px;top:0px;width:69px;height:1080px;overflow:hidden;"><div style="left:3.5px;top:405.64px;font-size:14.6px;line-height:14.6px;color:#000;white-space:pre;">REF_002</div></div>
<div style="left:121px;top:0px;width:126px;height:1080px;overflow:hidden;"><div style="left:3.5px;top:405.64px;font-size:14.6px;line-height:14.6px;color:#000;white-space:pre;">Le Mas Provençal</div></div>
<div style="left:248px;top:0px;width:108px;height:1080px;overflow:hidden;"><div style="left:3.5px;top:405.64px;font-size:14.6px;line-height:14.6px;color:#000;white-space:pre;">Traditionnel</div></div>
<div style="left:357px;top:0px;width:58px;height:1080px;overflow:hidden;"><div style="left:3.5px;top:405.64px;font-size:14.6px;line-height:14.6px;color:#000;white-space:pre;">120 m²</div></div>
<div style="left:416px;top:0px;width:67px;height:1080px;overflow:hidden;"><div style="right:4px;top:405.64px;font-size:14.6px;line-height:14.6px;color:#000;white-space:pre;">380 000€</div></div>
<div style="left:484px;top:0px;width:211px;height:1080px;overflow:hidden;"><div style="left:3.5px;top:405.64px;font-size:14.6px;line-height:14.6px;color:#000;white-space:pre;">Magnam pretium labore convallis</div></div>
<div style="left:696px;top:0px;width:286px;height:1080px;overflow:hidden;"><div style="left:3.5px;top:405.64px;font-size:14.6px;line-height:14.6px;color:#1155cc;white-space:pre;text-decoration:underline;">www.notreagenceimmo.com/REF_002.htm</div></div>
<div style="left:983px;top:0px;width:171px;height:1080px;overflow:hidden;"><div style="left:3.5px;top:405.64px;font-size:14.6px;line-height:14.6px;color:#000;white-space:pre;">REF_002_image_01.png</div></div>
<div style="left:1155px;top:0px;width:171px;height:1080px;overflow:hidden;"><div style="left:3.5px;top:405.64px;font-size:14.6px;line-height:14.6px;color:#000;white-space:pre;">REF_002_image_02.png</div></div>
<div style="left:1327px;top:0px;width:171px;height:1080px;overflow:hidden;"><div style="left:3.5px;top:405.64px;font-size:14.6px;line-height:14.6px;color:#000;white-space:pre;">REF_002_image_03.png</div></div>
<div style="left:1499px;top:0px;width:171px;height:1080px;overflow:hidden;"><div style="left:3.5px;top:405.64px;font-size:14.6px;line-height:14.6px;color:#000;white-space:pre;">REF_002_image_04.png</div></div>
<div style="left:1671px;top:0px;width:171px;height:1080px;overflow:hidden;"><div style="left:3.5px;top:405.64px;font-size:14.6px;line-height:14.6px;color:#000;white-space:pre;">REF_002_image_05.png</div></div>
<div style="left:1843px;top:0px;width:63px;height:1080px;overflow:hidden;"><div style="left:3.5px;top:405.64px;font-size:14.6px;line-height:14.6px;color:#000;white-space:pre;">REF_002_image_06.png</div></div>
<div style="left:51px;top:0px;width:69px;height:1080px;overflow:hidden;"><div style="left:3.5px;top:464.64px;font-size:14.6px;line-height:14.6px;color:#000;white-space:pre;">REF_003</div></div>
<div style="left:121px;top:0px;width:126px;height:1080px;overflow:hidden;"><div style="left:3.5px;top:464.64px;font-size:14.6px;line-height:14.6px;color:#000;white-space:pre;">City Loft</div></div>
<div style="left:248px;top:0px;width:108px;height:1080px;overflow:hidden;"><div style="left:3.5px;top:464.64px;font-size:14.6px;line-height:14.6px;color:#000;white-space:pre;">Urbain</div></div>
<div style="left:357px;top:0px;width:58px;height:1080px;overflow:hidden;"><div style="left:3.5px;top:464.64px;font-size:14.6px;line-height:14.6px;color:#000;white-space:pre;">95 m²</div></div>
<div style="left:416px;top:0px;width:67px;height:1080px;overflow:hidden;"><div style="right:4px;top:464.64px;font-size:14.6px;line-height:14.6px;color:#000;white-space:pre;">320 000€</div></div>
<div style="left:484px;top:0px;width:211px;height:1080px;overflow:hidden;"><div style="left:3.5px;top:464.64px;font-size:14.6px;line-height:14.6px;color:#000;white-space:pre;">Magnam pretium labore convallis</div></div>
<div style="left:696px;top:0px;width:286px;height:1080px;overflow:hidden;"><div style="left:3.5px;top:464.64px;font-size:14.6px;line-height:14.6px;color:#1155cc;white-space:pre;text-decoration:underline;">www.notreagenceimmo.com/REF_003.htm</div></div>
<div style="left:983px;top:0px;width:171px;height:1080px;overflow:hidden;"><div style="left:3.5px;top:464.64px;font-size:14.6px;line-height:14.6px;color:#000;white-space:pre;">REF_003_image_01.png</div></div>
<div style="left:1155px;top:0px;width:171px;height:1080px;overflow:hidden;"><div style="left:3.5px;top:464.64px;font-size:14.6px;line-height:14.6px;color:#000;white-space:pre;">REF_003_image_02.png</div></div>
<div style="left:1327px;top:0px;width:171px;height:1080px;overflow:hidden;"><div style="left:3.5px;top:464.64px;font-size:14.6px;line-height:14.6px;color:#000;white-space:pre;">REF_003_image_03.png</div></div>
<div style="left:1499px;top:0px;width:171px;height:1080px;overflow:hidden;"><div style="left:3.5px;top:464.64px;font-size:14.6px;line-height:14.6px;color:#000;white-space:pre;">REF_003_image_04.png</div></div>
<div style="left:1671px;top:0px;width:171px;height:1080px;overflow:hidden;"><div style="left:3.5px;top:464.64px;font-size:14.6px;line-height:14.6px;color:#000;white-space:pre;">REF_003_image_05.png</div></div>
<div style="left:1843px;top:0px;width:63px;height:1080px;overflow:hidden;"><div style="left:3.5px;top:464.64px;font-size:14.6px;line-height:14.6px;color:#000;white-space:pre;">REF_003_image_06.png</div></div>
<div style="left:51px;top:0px;width:69px;height:1080px;overflow:hidden;"><div style="left:3.5px;top:523.64px;font-size:14.6px;line-height:14.6px;color:#000;white-space:pre;">REF_004</div></div>
<div style="left:121px;top:0px;width:126px;height:1080px;overflow:hidden;"><div style="left:3.5px;top:523.64px;font-size:14.6px;line-height:14.6px;color:#000;white-space:pre;">Eco-Lodge</div></div>
<div style="left:248px;top:0px;width:108px;height:1080px;overflow:hidden;"><div style="left:3.5px;top:523.64px;font-size:14.6px;line-height:14.6px;color:#000;white-space:pre;">Bois</div></div>
<div style="left:1499px;top:0px;width:171px;height:1080px;overflow:hidden;"><div style="left:3.5px;top:523.64px;font-size:14.6px;line-height:14.6px;color:#000;white-space:pre;">REF_004_image_04.png</div></div>
<div style="left:1671px;top:0px;width:171px;height:1080px;overflow:hidden;"><div style="left:3.5px;top:523.64px;font-size:14.6px;line-height:14.6px;color:#000;white-space:pre;">REF_004_image_05.png</div></div>
<div style="left:1843px;top:0px;width:63px;height:1080px;overflow:hidden;"><div style="left:3.5px;top:523.64px;font-size:14.6px;line-height:14.6px;color:#000;white-space:pre;">REF_004_image_06.png</div></div>
<div style="left:51px;top:0px;width:69px;height:1080px;overflow:hidden;"><div style="left:3.5px;top:582.64px;font-size:14.6px;line-height:14.6px;color:#000;white-space:pre;">REF_005</div></div>
<div style="left:121px;top:0px;width:126px;height:1080px;overflow:hidden;"><div style="left:3.5px;top:582.64px;font-size:14.6px;line-height:14.6px;color:#000;white-space:pre;">Manoir Moderne</div></div>
<div style="left:248px;top:0px;width:108px;height:1080px;overflow:hidden;"><div style="left:3.5px;top:582.64px;font-size:14.6px;line-height:14.6px;color:#000;white-space:pre;">Prestige</div></div>
<div style="left:1499px;top:0px;width:171px;height:1080px;overflow:hidden;"><div style="left:3.5px;top:582.64px;font-size:14.6px;line-height:14.6px;color:#000;white-space:pre;">REF_005_image_04.png</div></div>
<div style="left:1671px;top:0px;width:171px;height:1080px;overflow:hidden;"><div style="left:3.5px;top:582.64px;font-size:14.6px;line-height:14.6px;color:#000;white-space:pre;">REF_005_image_05.png</div></div>
<div style="left:1843px;top:0px;width:63px;height:1080px;overflow:hidden;"><div style="left:3.5px;top:582.64px;font-size:14.6px;line-height:14.6px;color:#000;white-space:pre;">REF_005_image_06.png</div></div>
<div style="left:51px;top:0px;width:69px;height:1080px;overflow:hidden;"><div style="left:3.5px;top:641.64px;font-size:14.6px;line-height:14.6px;color:#000;white-space:pre;">REF_006</div></div>
<div style="left:121px;top:0px;width:126px;height:1080px;overflow:hidden;"><div style="left:3.5px;top:641.64px;font-size:14.6px;line-height:14.6px;color:#000;white-space:pre;">Tiny House XL</div></div>
<div style="left:248px;top:0px;width:108px;height:1080px;overflow:hidden;"><div style="left:3.5px;top:641.64px;font-size:14.6px;line-height:14.6px;color:#000;white-space:pre;">Minimaliste</div></div>
<div style="left:1499px;top:0px;width:171px;height:1080px;overflow:hidden;"><div style="left:3.5px;top:641.64px;font-size:14.6px;line-height:14.6px;color:#000;white-space:pre;">REF_006_image_04.png</div></div>
<div style="left:1671px;top:0px;width:171px;height:1080px;overflow:hidden;"><div style="left:3.5px;top:641.64px;font-size:14.6px;line-height:14.6px;color:#000;white-space:pre;">REF_006_image_05.png</div></div>
<div style="left:1843px;top:0px;width:63px;height:1080px;overflow:hidden;"><div style="left:3.5px;top:641.64px;font-size:14.6px;line-height:14.6px;color:#000;white-space:pre;">REF_006_image_06.png</div></div>
<div style="left:51px;top:0px;width:69px;height:1080px;overflow:hidden;"><div style="left:3.5px;top:700.64px;font-size:14.6px;line-height:14.6px;color:#000;white-space:pre;">REF_007</div></div>
<div style="left:121px;top:0px;width:126px;height:1080px;overflow:hidden;"><div style="left:3.5px;top:700.64px;font-size:14.6px;line-height:14.6px;color:#000;white-space:pre;">Pavillon Solaire</div></div>
<div style="left:248px;top:0px;width:108px;height:1080px;overflow:hidden;"><div style="left:3.5px;top:700.64px;font-size:14.6px;line-height:14.6px;color:#000;white-space:pre;">Écologique</div></div>
<div style="left:1499px;top:0px;width:171px;height:1080px;overflow:hidden;"><div style="left:3.5px;top:700.64px;font-size:14.6px;line-height:14.6px;color:#000;white-space:pre;">REF_007_image_04.png</div></div>
<div style="left:1671px;top:0px;width:171px;height:1080px;overflow:hidden;"><div style="left:3.5px;top:700.64px;font-size:14.6px;line-height:14.6px;color:#000;white-space:pre;">REF_007_image_05.png</div></div>
<div style="left:1843px;top:0px;width:63px;height:1080px;overflow:hidden;"><div style="left:3.5px;top:700.64px;font-size:14.6px;line-height:14.6px;color:#000;white-space:pre;">REF_007_image_06.png</div></div>
<div style="left:51px;top:0px;width:69px;height:1080px;overflow:hidden;"><div style="left:3.5px;top:759.64px;font-size:14.6px;line-height:14.6px;color:#000;white-space:pre;">REF_008</div></div>
<div style="left:121px;top:0px;width:126px;height:1080px;overflow:hidden;"><div style="left:3.5px;top:759.64px;font-size:14.6px;line-height:14.6px;color:#000;white-space:pre;">La Californienne</div></div>
<div style="left:248px;top:0px;width:108px;height:1080px;overflow:hidden;"><div style="left:3.5px;top:759.64px;font-size:14.6px;line-height:14.6px;color:#000;white-space:pre;">Plain-pied</div></div>
<div style="left:1499px;top:0px;width:171px;height:1080px;overflow:hidden;"><div style="left:3.5px;top:759.64px;font-size:14.6px;line-height:14.6px;color:#000;white-space:pre;">REF_008_image_04.png</div></div>
<div style="left:1671px;top:0px;width:171px;height:1080px;overflow:hidden;"><div style="left:3.5px;top:759.64px;font-size:14.6px;line-height:14.6px;color:#000;white-space:pre;">REF_008_image_05.png</div></div>
<div style="left:1843px;top:0px;width:63px;height:1080px;overflow:hidden;"><div style="left:3.5px;top:759.64px;font-size:14.6px;line-height:14.6px;color:#000;white-space:pre;">REF_008_image_06.png</div></div>
<div style="left:51px;top:0px;width:69px;height:1080px;overflow:hidden;"><div style="left:3.5px;top:818.64px;font-size:14.6px;line-height:14.6px;color:#000;white-space:pre;">REF_009</div></div>
<div style="left:121px;top:0px;width:126px;height:1080px;overflow:hidden;"><div style="left:3.5px;top:818.64px;font-size:14.6px;line-height:14.6px;color:#000;white-space:pre;">Cube Blanc</div></div>
<div style="left:248px;top:0px;width:108px;height:1080px;overflow:hidden;"><div style="left:3.5px;top:818.64px;font-size:14.6px;line-height:14.6px;color:#000;white-space:pre;">Design</div></div>
<div style="left:1499px;top:0px;width:171px;height:1080px;overflow:hidden;"><div style="left:3.5px;top:818.64px;font-size:14.6px;line-height:14.6px;color:#000;white-space:pre;">REF_009_image_04.png</div></div>
<div style="left:1671px;top:0px;width:171px;height:1080px;overflow:hidden;"><div style="left:3.5px;top:818.64px;font-size:14.6px;line-height:14.6px;color:#000;white-space:pre;">REF_009_image_05.png</div></div>
<div style="left:1843px;top:0px;width:63px;height:1080px;overflow:hidden;"><div style="left:3.5px;top:818.64px;font-size:14.6px;line-height:14.6px;color:#000;white-space:pre;">REF_009_image_06.png</div></div>
<div style="left:51px;top:0px;width:69px;height:1080px;overflow:hidden;"><div style="left:3.5px;top:877.64px;font-size:14.6px;line-height:14.6px;color:#000;white-space:pre;">REF_010</div></div>
<div style="left:121px;top:0px;width:126px;height:1080px;overflow:hidden;"><div style="left:3.5px;top:877.64px;font-size:14.6px;line-height:14.6px;color:#000;white-space:pre;">Chalet Alpin</div></div>
<div style="left:248px;top:0px;width:108px;height:1080px;overflow:hidden;"><div style="left:3.5px;top:877.64px;font-size:14.6px;line-height:14.6px;color:#000;white-space:pre;">Montagne</div></div>
<div style="left:1499px;top:0px;width:171px;height:1080px;overflow:hidden;"><div style="left:3.5px;top:877.64px;font-size:14.6px;line-height:14.6px;color:#000;white-space:pre;">REF_010_image_04.png</div></div>
<div style="left:1671px;top:0px;width:171px;height:1080px;overflow:hidden;"><div style="left:3.5px;top:877.64px;font-size:14.6px;line-height:14.6px;color:#000;white-space:pre;">REF_010_image_05.png</div></div>
<div style="left:1843px;top:0px;width:63px;height:1080px;overflow:hidden;"><div style="left:3.5px;top:877.64px;font-size:14.6px;line-height:14.6px;color:#000;white-space:pre;">REF_010_image_06.png</div></div>
<div style="left:695px;top:303px;width:2px;height:22.5px;background:#3d65ad;"></div>
<div style="left:981px;top:303px;width:2px;height:22.5px;background:#3d65ad;"></div>
<div style="left:695px;top:323px;width:288px;height:2px;background:#3d65ad;"></div>
<div style="left:977.5px;top:320.5px;width:10px;height:10px;background:#1a5fd6;border-radius:50%;border:1px solid #fff;box-sizing:content-box;margin:-1px;"></div>
<div style="left:1906px;top:276px;width:14px;height:764px;background:#fff;"></div>
<div style="left:1906px;top:276px;width:1px;height:764px;background:#e2e2e2;"></div>
<div style="left:1908px;top:303px;width:10px;height:28px;background:#dadce0;border-radius:5px;"></div>
<svg style="left:1908px;top:994px;" width="10" height="8" viewBox="0 0 10 8"><path d="M1 6h8L5 1z" fill="#8a8a8a"/></svg>
<svg style="left:1908px;top:1012px;" width="10" height="8" viewBox="0 0 10 8"><path d="M1 2h8L5 7z" fill="#8a8a8a"/></svg>
<div style="left:0px;top:1026px;width:1906px;height:13px;background:#fff;"></div>
<div style="left:0px;top:1026px;width:50px;height:13px;background:#f6f7f8;"></div>
<div style="left:0px;top:1038.5px;width:1920px;height:1px;background:#e2e2e2;"></div>
<div style="left:51px;top:1026px;width:1px;height:13px;background:#e2e2e2;"></div>
<div style="left:53px;top:1027px;width:959px;height:10px;background:#dadde1;border-radius:5px;"></div>
<div style="left:1874px;top:1026px;width:1px;height:13px;background:#e2e2e2;"></div>
<svg style="left:1878px;top:1027px;" width="8" height="10" viewBox="0 0 8 10"><path d="M6 1v8L1 5z" fill="#8a8a8a"/></svg>
<svg style="left:1896px;top:1027px;" width="8" height="10" viewBox="0 0 8 10"><path d="M2 1v8l5-4z" fill="#8a8a8a"/></svg>
<div style="left:0px;top:1039px;width:1920px;height:41px;background:#f9fbfd;border-radius:0 0 16px 16px;"></div>
<svg style="left:58px;top:1052px;" width="18" height="18" viewBox="0 0 18 18"><path d="M9 3v12M3 9h12" stroke="#444746" stroke-width="1.7"/></svg>
<svg style="left:102px;top:1053px;" width="18" height="16" viewBox="0 0 18 16"><path d="M2 3.5h14M2 8h14M2 12.5h14" stroke="#444746" stroke-width="1.7"/></svg>
<div style="left:146px;top:1039px;width:140px;height:41px;background:#e1e9f7;"></div>
<div style="left:159.00px;top:1053.83px;font-size:16.50px;line-height:16.50px;color:#2f5cb5;white-space:pre;letter-spacing:0.784px;-webkit-text-stroke:0.5px #2f5cb5;">jeu complet</div>
<svg style="left:263px;top:1059px;" width="10" height="6" viewBox="0 0 10 6"><path d="M0 0h10L5 5z" fill="#2f5cb5"/></svg>
<div style="left:298.50px;top:1053.83px;font-size:16.50px;line-height:16.50px;color:#444746;white-space:pre;letter-spacing:0.587px;">jeu partiel</div>
<svg style="left:387px;top:1059px;" width="10" height="6" viewBox="0 0 10 6"><path d="M0 0h10L5 5z" fill="#444746"/></svg>
<svg style="left:1881px;top:1052px;" width="14" height="18" viewBox="0 0 14 18"><path d="M10 3l-6 6 6 6" stroke="#444746" stroke-width="2" fill="none"/></svg>
<div style="left:1680px;top:916px;width:231px;height:34px;background:#fff;border-radius:17px;box-shadow:0 1px 3px rgba(60,64,67,.3),0 4px 8px 3px rgba(60,64,67,.15);"></div>
<svg style="left:1689px;top:922px;" width="20" height="22" viewBox="0 0 20 22"><path d="M2 6h11M2 6v14h14v-8M6 10v10M10 10v10M14 14v6M2 14h4" stroke="#444746" stroke-width="1.8" fill="none"/><path d="M16 1c.4 2.2 1.3 3.1 3.5 3.5-2.2.4-3.1 1.3-3.5 3.5-.4-2.2-1.3-3.1-3.5-3.5 2.2-.4 3.1-1.3 3.5-3.5z" fill="#444746"/></svg>
<div style="left:1717.50px;top:925.80px;font-size:15.00px;line-height:15.00px;color:#1f1f1f;white-space:pre;letter-spacing:-0.454px;">Convertir en tableau</div>
<svg style="left:1858px;top:929px;" width="11" height="6" viewBox="0 0 11 6"><path d="M0 0h11L5.5 5.5z" fill="#444746"/></svg>
<svg style="left:1885px;top:926px;" width="14" height="14" viewBox="0 0 14 14"><path d="M2 2l10 10M12 2L2 12" stroke="#444746" stroke-width="1.9"/></svg>
<div style="left:360px;top:487px;width:1133px;height:484px;background:#29281f;border-radius:23px;border:1px solid #080806;box-sizing:border-box;box-shadow:0 26px 42px rgba(0,0,0,.42),0 6px 16px rgba(0,0,0,.22);"></div>
<div style="left:359px;top:486px;width:1135px;height:486px;border:1px solid rgba(170,170,170,.85);border-radius:24px;box-sizing:border-box;"></div>
<div style="left:379px;top:507px;width:14px;height:14px;background:#ff5f57;border-radius:50%;"></div>
<div style="left:402px;top:507px;width:14px;height:14px;background:#febc2e;border-radius:50%;"></div>
<div style="left:425px;top:507px;width:14px;height:14px;background:#28c840;border-radius:50%;"></div>
<div style="left:456.5px;top:496.5px;width:72px;height:35px;border:1px solid #3d3b32;border-radius:18px;box-sizing:border-box;"></div>
<div style="left:492px;top:505px;width:1px;height:18px;background:#3d3b32;"></div>
<svg style="left:467px;top:505px;" width="14" height="18" viewBox="0 0 14 18"><path d="M10 2L3 9l7 7" stroke="#e6e6e6" stroke-width="2" fill="none" stroke-linecap="round" stroke-linejoin="round"/></svg>
<svg style="left:503px;top:505px;" width="14" height="18" viewBox="0 0 14 18"><path d="M4 2l7 7-7 7" stroke="#8f8d85" stroke-width="2" fill="none" stroke-linecap="round" stroke-linejoin="round"/></svg>
<div style="left:541.50px;top:506.38px;font-size:15.50px;line-height:15.50px;color:#ececec;white-space:pre;font-weight:bold;letter-spacing:-0.783px;">REF_010</div>
<div style="left:820.5px;top:496.5px;width:147px;height:35px;background:#201f18;border:1px solid #45433a;border-radius:18px;box-sizing:border-box;"></div>
<div style="left:857px;top:505px;width:1px;height:18px;background:#3d3b32;"></div>
<div style="left:896.5px;top:500.5px;width:33px;height:27px;background:#4a483f;border-radius:14px;"></div>
<svg style="left:830px;top:505px;" width="19" height="18" viewBox="0 0 19 18"><rect x="1.5" y="1.5" width="6.5" height="6.5" rx="1" stroke="#e8e8e8" stroke-width="1.7" fill="none"/><rect x="11" y="1.5" width="6.5" height="6.5" rx="1" stroke="#e8e8e8" stroke-width="1.7" fill="none"/><rect x="1.5" y="10" width="6.5" height="6.5" rx="1" stroke="#e8e8e8" stroke-width="1.7" fill="none"/><rect x="11" y="10" width="6.5" height="6.5" rx="1" stroke="#e8e8e8" stroke-width="1.7" fill="none"/></svg>
<svg style="left:867px;top:506px;" width="19" height="16" viewBox="0 0 19 16"><g fill="#e8e8e8"><circle cx="2" cy="2" r="1.2"/><circle cx="2" cy="7.5" r="1.2"/><circle cx="2" cy="13" r="1.2"/></g><path d="M6 2h12M6 7.5h12M6 13h12" stroke="#e8e8e8" stroke-width="1.7"/></svg>
<svg style="left:903px;top:505px;" width="20" height="18" viewBox="0 0 20 18"><rect x="1.5" y="1.5" width="17" height="15" rx="2" stroke="#e8e8e8" stroke-width="1.7" fill="none"/><path d="M7.3 1.5v15M12.7 1.5v15" stroke="#e8e8e8" stroke-width="1.7" fill="none"/></svg>
<svg style="left:938px;top:505px;" width="21" height="18" viewBox="0 0 21 18"><rect x="1.5" y="1" width="18" height="11" rx="2" stroke="#e8e8e8" stroke-width="1.7" fill="none"/><g fill="#e8e8e8"><rect x="1" y="14.5" width="2.5" height="2.5"/><rect x="5" y="14.5" width="2.5" height="2.5"/><rect x="9" y="14.5" width="2.5" height="2.5"/><rect x="13" y="14.5" width="2.5" height="2.5"/><rect x="17" y="14.5" width="2.5" height="2.5"/></g></svg>
<div style="left:984.5px;top:496.5px;width:49px;height:35px;border:1px solid #45433a;border-radius:18px;box-sizing:border-box;"></div>
<svg style="left:993px;top:505px;" width="30" height="19" viewBox="0 0 30 19"><path d="M0 1.2h19" stroke="#e8e8e8" stroke-width="1.3"/><g fill="none" stroke="#e8e8e8" stroke-width="1.3"><rect x="1" y="4" width="4.5" height="4"/><rect x="7.5" y="4" width="4.5" height="4"/><rect x="14" y="4" width="4.5" height="4"/><rect x="1" y="12" width="4.5" height="4"/><rect x="7.5" y="12" width="4.5" height="4"/><rect x="14" y="12" width="4.5" height="4"/></g><path d="M22.5 8l3 3 3-3" stroke="#e8e8e8" stroke-width="1.5" fill="none"/></svg>
<div style="left:1052.5px;top:496.5px;width:109px;height:35px;border:1px solid #45433a;border-radius:18px;box-sizing:border-box;"></div>
<svg style="left:1061px;top:503px;" width="18" height="22" viewBox="0 0 18 22"><path d="M5 8H2.5v12.5h13V8H13M9 14V2M5.5 5.5L9 2l3.5 3.5" stroke="#e8e8e8" stroke-width="1.7" fill="none" stroke-linejoin="round"/></svg>
<svg style="left:1097px;top:504px;" width="21" height="21" viewBox="0 0 21 21"><path d="M10.5 2.5h7.5v7.5l-8.5 8.5-7.5-7.5z" stroke="#e8e8e8" stroke-width="1.7" fill="none" stroke-linejoin="round"/><circle cx="14.5" cy="6" r="1.3" fill="#e8e8e8"/></svg>
<svg style="left:1133px;top:511px;" width="20" height="6" viewBox="0 0 20 6"><g fill="#e8e8e8"><circle cx="3" cy="3" r="1.9"/><circle cx="10" cy="3" r="1.9"/><circle cx="17" cy="3" r="1.9"/></g></svg>
<div style="left:1180.5px;top:496.5px;width:304px;height:35px;background:#1f1e17;border:1px solid #46443b;border-radius:18px;box-sizing:border-box;"></div>
<svg style="left:1190px;top:506px;" width="17" height="17" viewBox="0 0 17 17"><circle cx="7" cy="7" r="5.2" stroke="#a8a69e" stroke-width="1.7" fill="none"/><path d="M11 11l4.5 4.5" stroke="#a8a69e" stroke-width="1.8" stroke-linecap="round"/></svg>
<div style="left:1212.00px;top:507.65px;font-size:14.00px;line-height:14.00px;color:#a8a69e;white-space:pre;letter-spacing:-0.137px;-webkit-text-stroke:0.45px #a8a69e;">Rechercher</div>
<div style="left:370px;top:542px;width:1081px;height:24px;background:#56544c;border-radius:12px;"></div>
<div style="left:370px;top:542px;width:256px;height:24px;background:#5a5950;border-radius:12px 0 0 12px;"></div>
<div style="left:626px;top:542px;width:1px;height:24px;background:rgba(210,205,190,.12);"></div>
<div style="left:370px;top:542px;width:1081px;height:24px;border-radius:12px;box-shadow:inset 0 0 0 1px rgba(215,210,190,.38);"></div>
<div style="left:904.00px;top:549.19px;font-size:11.00px;line-height:11.00px;color:#f0f0f0;white-space:pre;font-weight:bold;letter-spacing:-0.353px;">REF_010</div>
<div style="left:1457px;top:541px;width:27px;height:27px;border:1px solid #4a483f;border-radius:50%;box-sizing:border-box;"></div>
<svg style="left:1463px;top:547px;" width="16" height="16" viewBox="0 0 16 16"><path d="M8 2v12M2 8h12" stroke="#e8e8e8" stroke-width="1.7"/></svg>
<div style="left:660px;top:567px;width:1px;height:348px;background:#0f0f0c;"></div>
<div style="left:929px;top:567px;width:1px;height:348px;background:#0f0f0c;"></div>
<div style="left:1198px;top:567px;width:1px;height:348px;background:#0f0f0c;"></div>
<div style="left:1467px;top:567px;width:1px;height:348px;background:#0f0f0c;"></div>
<div style="left:370px;top:604px;width:279px;height:22px;background:#48474a;border-radius:7px;"></div>
<svg style="left:377px;top:585.5px;" width="15" height="13" viewBox="0 0 15 13"><defs><linearGradient id="fg" x1="0" y1="0" x2="0" y2="1"><stop offset="0" stop-color="#7fcaf5"/><stop offset="1" stop-color="#4fa9e6"/></linearGradient></defs><path d="M0 1.5A1.5 1.5 0 0 1 1.5 0h4l1.5 1.5h6.5A1.5 1.5 0 0 1 15 3v8.5a1.5 1.5 0 0 1-1.5 1.5h-12A1.5 1.5 0 0 1 0 11.5z" fill="#4ea6e0"/><rect x="0" y="3" width="15" height="10" rx="1.3" fill="url(#fg)"/></svg>
<div style="left:397.00px;top:586.23px;font-size:13.20px;line-height:13.20px;color:#e6e6e3;white-space:pre;letter-spacing:0.193px;">item_produit_MCS</div>
<svg style="left:638px;top:587px;" width="7" height="10" viewBox="0 0 7 10"><path d="M1.5 1.5L5 5 1.5 8.5" stroke="#8a887f" stroke-width="1.3" fill="none"/></svg>
<svg style="left:377px;top:607.5px;" width="15" height="13" viewBox="0 0 15 13"><defs><linearGradient id="fg" x1="0" y1="0" x2="0" y2="1"><stop offset="0" stop-color="#7fcaf5"/><stop offset="1" stop-color="#4fa9e6"/></linearGradient></defs><path d="M0 1.5A1.5 1.5 0 0 1 1.5 0h4l1.5 1.5h6.5A1.5 1.5 0 0 1 15 3v8.5a1.5 1.5 0 0 1-1.5 1.5h-12A1.5 1.5 0 0 1 0 11.5z" fill="#4ea6e0"/><rect x="0" y="3" width="15" height="10" rx="1.3" fill="url(#fg)"/></svg>
<div style="left:397.00px;top:608.23px;font-size:13.20px;line-height:13.20px;color:#e6e6e3;white-space:pre;letter-spacing:0.019px;">links</div>
<svg style="left:638px;top:609px;" width="7" height="10" viewBox="0 0 7 10"><path d="M1.5 1.5L5 5 1.5 8.5" stroke="#8a887f" stroke-width="1.3" fill="none"/></svg>
<svg style="left:377px;top:629.5px;" width="15" height="13" viewBox="0 0 15 13"><defs><linearGradient id="fg" x1="0" y1="0" x2="0" y2="1"><stop offset="0" stop-color="#7fcaf5"/><stop offset="1" stop-color="#4fa9e6"/></linearGradient></defs><path d="M0 1.5A1.5 1.5 0 0 1 1.5 0h4l1.5 1.5h6.5A1.5 1.5 0 0 1 15 3v8.5a1.5 1.5 0 0 1-1.5 1.5h-12A1.5 1.5 0 0 1 0 11.5z" fill="#4ea6e0"/><rect x="0" y="3" width="15" height="10" rx="1.3" fill="url(#fg)"/></svg>
<div style="left:397.00px;top:630.23px;font-size:13.20px;line-height:13.20px;color:#e6e6e3;white-space:pre;letter-spacing:0.063px;">packs</div>
<svg style="left:638px;top:631px;" width="7" height="10" viewBox="0 0 7 10"><path d="M1.5 1.5L5 5 1.5 8.5" stroke="#8a887f" stroke-width="1.3" fill="none"/></svg>
<svg style="left:377px;top:651.5px;" width="15" height="13" viewBox="0 0 15 13"><defs><linearGradient id="fg" x1="0" y1="0" x2="0" y2="1"><stop offset="0" stop-color="#7fcaf5"/><stop offset="1" stop-color="#4fa9e6"/></linearGradient></defs><path d="M0 1.5A1.5 1.5 0 0 1 1.5 0h4l1.5 1.5h6.5A1.5 1.5 0 0 1 15 3v8.5a1.5 1.5 0 0 1-1.5 1.5h-12A1.5 1.5 0 0 1 0 11.5z" fill="#4ea6e0"/><rect x="0" y="3" width="15" height="10" rx="1.3" fill="url(#fg)"/></svg>
<div style="left:397.00px;top:652.23px;font-size:13.20px;line-height:13.20px;color:#e6e6e3;white-space:pre;letter-spacing:0.180px;">rendus et masters</div>
<svg style="left:638px;top:653px;" width="7" height="10" viewBox="0 0 7 10"><path d="M1.5 1.5L5 5 1.5 8.5" stroke="#8a887f" stroke-width="1.3" fill="none"/></svg>
<svg style="left:618px;top:584px;" width="18" height="16" viewBox="0 0 18 16"><path d="M5 12.5a3.8 3.8 0 0 1-.5-7.5A5 5 0 0 1 14 5.2 3.5 3.5 0 0 1 13.5 12.5H12" stroke="#8a887f" stroke-width="1.3" fill="none"/><path d="M9 7.5v7.5M6.5 12.5L9 15l2.5-2.5" stroke="#8a887f" stroke-width="1.3" fill="none"/></svg>
<div style="left:671.5px;top:582px;width:247px;height:21px;background:#48474a;border-radius:7px;"></div>
<svg style="left:678px;top:585.5px;" width="15" height="13" viewBox="0 0 15 13"><defs><linearGradient id="fg" x1="0" y1="0" x2="0" y2="1"><stop offset="0" stop-color="#7fcaf5"/><stop offset="1" stop-color="#4fa9e6"/></linearGradient></defs><path d="M0 1.5A1.5 1.5 0 0 1 1.5 0h4l1.5 1.5h6.5A1.5 1.5 0 0 1 15 3v8.5a1.5 1.5 0 0 1-1.5 1.5h-12A1.5 1.5 0 0 1 0 11.5z" fill="#4ea6e0"/><rect x="0" y="3" width="15" height="10" rx="1.3" fill="url(#fg)"/></svg>
<div style="left:698.00px;top:586.23px;font-size:13.20px;line-height:13.20px;color:#e6e6e3;white-space:pre;letter-spacing:0.286px;">jeucomplet</div>
<svg style="left:908px;top:587px;" width="7" height="10" viewBox="0 0 7 10"><path d="M1.5 1.5L5 5 1.5 8.5" stroke="#8a887f" stroke-width="1.3" fill="none"/></svg>
<svg style="left:679px;top:607px;" width="12" height="15" viewBox="0 0 12 15"><rect x="0.5" y="0.5" width="11" height="14" rx="1" fill="#d8cfc0"/><rect x="1.5" y="2" width="9" height="11" fill="#8c6f55"/><path d="M1.5 13l4-6 5 6z" fill="#c9b9a0"/></svg>
<div style="left:698.00px;top:608.23px;font-size:13.20px;line-height:13.20px;color:#e6e6e3;white-space:pre;letter-spacing:-0.059px;">pex_01.jpg</div>
<svg style="left:678px;top:629px;" width="14" height="14" viewBox="0 0 14 14"><rect x="0.5" y="0.5" width="13" height="13" rx="1.5" fill="#e2b97c"/><rect x="1.5" y="2" width="11" height="10" fill="#b7834a"/><path d="M1.5 12l3-4 3 2 5-4v6z" fill="#6b5236"/></svg>
<div style="left:698.00px;top:630.23px;font-size:13.20px;line-height:13.20px;color:#e6e6e3;white-space:pre;letter-spacing:0.101px;">pex_02.jpg</div>
<div style="left:939.5px;top:780px;width:249px;height:22px;background:#2458d6;border-radius:7px;"></div>
<svg style="left:947px;top:585.5px;" width="15" height="13" viewBox="0 0 15 13"><defs><linearGradient id="fg" x1="0" y1="0" x2="0" y2="1"><stop offset="0" stop-color="#7fcaf5"/><stop offset="1" stop-color="#4fa9e6"/></linearGradient></defs><path d="M0 1.5A1.5 1.5 0 0 1 1.5 0h4l1.5 1.5h6.5A1.5 1.5 0 0 1 15 3v8.5a1.5 1.5 0 0 1-1.5 1.5h-12A1.5 1.5 0 0 1 0 11.5z" fill="#4ea6e0"/><rect x="0" y="3" width="15" height="10" rx="1.3" fill="url(#fg)"/></svg>
<div style="left:967.00px;top:586.23px;font-size:13.20px;line-height:13.20px;color:#e6e6e3;white-space:pre;letter-spacing:-0.710px;">REF_001</div>
<svg style="left:1176px;top:587px;" width="7" height="10" viewBox="0 0 7 10"><path d="M1.5 1.5L5 5 1.5 8.5" stroke="#8a887f" stroke-width="1.3" fill="none"/></svg>
<svg style="left:947px;top:607.5px;" width="15" height="13" viewBox="0 0 15 13"><defs><linearGradient id="fg" x1="0" y1="0" x2="0" y2="1"><stop offset="0" stop-color="#7fcaf5"/><stop offset="1" stop-color="#4fa9e6"/></linearGradient></defs><path d="M0 1.5A1.5 1.5 0 0 1 1.5 0h4l1.5 1.5h6.5A1.5 1.5 0 0 1 15 3v8.5a1.5 1.5 0 0 1-1.5 1.5h-12A1.5 1.5 0 0 1 0 11.5z" fill="#4ea6e0"/><rect x="0" y="3" width="15" height="10" rx="1.3" fill="url(#fg)"/></svg>
<div style="left:967.00px;top:608.23px;font-size:13.20px;line-height:13.20px;color:#e6e6e3;white-space:pre;letter-spacing:-0.538px;">REF_002</div>
<svg style="left:1176px;top:609px;" width="7" height="10" viewBox="0 0 7 10"><path d="M1.5 1.5L5 5 1.5 8.5" stroke="#8a887f" stroke-width="1.3" fill="none"/></svg>
<svg style="left:947px;top:629.5px;" width="15" height="13" viewBox="0 0 15 13"><defs><linearGradient id="fg" x1="0" y1="0" x2="0" y2="1"><stop offset="0" stop-color="#7fcaf5"/><stop offset="1" stop-color="#4fa9e6"/></linearGradient></defs><path d="M0 1.5A1.5 1.5 0 0 1 1.5 0h4l1.5 1.5h6.5A1.5 1.5 0 0 1 15 3v8.5a1.5 1.5 0 0 1-1.5 1.5h-12A1.5 1.5 0 0 1 0 11.5z" fill="#4ea6e0"/><rect x="0" y="3" width="15" height="10" rx="1.3" fill="url(#fg)"/></svg>
<div style="left:967.00px;top:630.23px;font-size:13.20px;line-height:13.20px;color:#e6e6e3;white-space:pre;letter-spacing:-0.538px;">REF_003</div>
<svg style="left:1176px;top:631px;" width="7" height="10" viewBox="0 0 7 10"><path d="M1.5 1.5L5 5 1.5 8.5" stroke="#8a887f" stroke-width="1.3" fill="none"/></svg>
<svg style="left:947px;top:651.5px;" width="15" height="13" viewBox="0 0 15 13"><defs><linearGradient id="fg" x1="0" y1="0" x2="0" y2="1"><stop offset="0" stop-color="#7fcaf5"/><stop offset="1" stop-color="#4fa9e6"/></linearGradient></defs><path d="M0 1.5A1.5 1.5 0 0 1 1.5 0h4l1.5 1.5h6.5A1.5 1.5 0 0 1 15 3v8.5a1.5 1.5 0 0 1-1.5 1.5h-12A1.5 1.5 0 0 1 0 11.5z" fill="#4ea6e0"/><rect x="0" y="3" width="15" height="10" rx="1.3" fill="url(#fg)"/></svg>
<div style="left:967.00px;top:652.23px;font-size:13.20px;line-height:13.20px;color:#e6e6e3;white-space:pre;letter-spacing:-0.538px;">REF_004</div>
<svg style="left:1176px;top:653px;" width="7" height="10" viewBox="0 0 7 10"><path d="M1.5 1.5L5 5 1.5 8.5" stroke="#8a887f" stroke-width="1.3" fill="none"/></svg>
<svg style="left:947px;top:673.5px;" width="15" height="13" viewBox="0 0 15 13"><defs><linearGradient id="fg" x1="0" y1="0" x2="0" y2="1"><stop offset="0" stop-color="#7fcaf5"/><stop offset="1" stop-color="#4fa9e6"/></linearGradient></defs><path d="M0 1.5A1.5 1.5 0 0 1 1.5 0h4l1.5 1.5h6.5A1.5 1.5 0 0 1 15 3v8.5a1.5 1.5 0 0 1-1.5 1.5h-12A1.5 1.5 0 0 1 0 11.5z" fill="#4ea6e0"/><rect x="0" y="3" width="15" height="10" rx="1.3" fill="url(#fg)"/></svg>
<div style="left:967.00px;top:674.23px;font-size:13.20px;line-height:13.20px;color:#e6e6e3;white-space:pre;letter-spacing:-0.538px;">REF_005</div>
<svg style="left:1176px;top:675px;" width="7" height="10" viewBox="0 0 7 10"><path d="M1.5 1.5L5 5 1.5 8.5" stroke="#8a887f" stroke-width="1.3" fill="none"/></svg>
<svg style="left:947px;top:695.5px;" width="15" height="13" viewBox="0 0 15 13"><defs><linearGradient id="fg" x1="0" y1="0" x2="0" y2="1"><stop offset="0" stop-color="#7fcaf5"/><stop offset="1" stop-color="#4fa9e6"/></linearGradient></defs><path d="M0 1.5A1.5 1.5 0 0 1 1.5 0h4l1.5 1.5h6.5A1.5 1.5 0 0 1 15 3v8.5a1.5 1.5 0 0 1-1.5 1.5h-12A1.5 1.5 0 0 1 0 11.5z" fill="#4ea6e0"/><rect x="0" y="3" width="15" height="10" rx="1.3" fill="url(#fg)"/></svg>
<div style="left:967.00px;top:696.23px;font-size:13.20px;line-height:13.20px;color:#e6e6e3;white-space:pre;letter-spacing:-0.538px;">REF_006</div>
<svg style="left:1176px;top:697px;" width="7" height="10" viewBox="0 0 7 10"><path d="M1.5 1.5L5 5 1.5 8.5" stroke="#8a887f" stroke-width="1.3" fill="none"/></svg>
<svg style="left:947px;top:717.5px;" width="15" height="13" viewBox="0 0 15 13"><defs><linearGradient id="fg" x1="0" y1="0" x2="0" y2="1"><stop offset="0" stop-color="#7fcaf5"/><stop offset="1" stop-color="#4fa9e6"/></linearGradient></defs><path d="M0 1.5A1.5 1.5 0 0 1 1.5 0h4l1.5 1.5h6.5A1.5 1.5 0 0 1 15 3v8.5a1.5 1.5 0 0 1-1.5 1.5h-12A1.5 1.5 0 0 1 0 11.5z" fill="#4ea6e0"/><rect x="0" y="3" width="15" height="10" rx="1.3" fill="url(#fg)"/></svg>
<div style="left:967.00px;top:718.23px;font-size:13.20px;line-height:13.20px;color:#e6e6e3;white-space:pre;letter-spacing:-0.538px;">REF_007</div>
<svg style="left:1176px;top:719px;" width="7" height="10" viewBox="0 0 7 10"><path d="M1.5 1.5L5 5 1.5 8.5" stroke="#8a887f" stroke-width="1.3" fill="none"/></svg>
<svg style="left:947px;top:739.5px;" width="15" height="13" viewBox="0 0 15 13"><defs><linearGradient id="fg" x1="0" y1="0" x2="0" y2="1"><stop offset="0" stop-color="#7fcaf5"/><stop offset="1" stop-color="#4fa9e6"/></linearGradient></defs><path d="M0 1.5A1.5 1.5 0 0 1 1.5 0h4l1.5 1.5h6.5A1.5 1.5 0 0 1 15 3v8.5a1.5 1.5 0 0 1-1.5 1.5h-12A1.5 1.5 0 0 1 0 11.5z" fill="#4ea6e0"/><rect x="0" y="3" width="15" height="10" rx="1.3" fill="url(#fg)"/></svg>
<div style="left:967.00px;top:740.23px;font-size:13.20px;line-height:13.20px;color:#e6e6e3;white-space:pre;letter-spacing:-0.538px;">REF_008</div>
<svg style="left:1176px;top:741px;" width="7" height="10" viewBox="0 0 7 10"><path d="M1.5 1.5L5 5 1.5 8.5" stroke="#8a887f" stroke-width="1.3" fill="none"/></svg>
<svg style="left:947px;top:761.5px;" width="15" height="13" viewBox="0 0 15 13"><defs><linearGradient id="fg" x1="0" y1="0" x2="0" y2="1"><stop offset="0" stop-color="#7fcaf5"/><stop offset="1" stop-color="#4fa9e6"/></linearGradient></defs><path d="M0 1.5A1.5 1.5 0 0 1 1.5 0h4l1.5 1.5h6.5A1.5 1.5 0 0 1 15 3v8.5a1.5 1.5 0 0 1-1.5 1.5h-12A1.5 1.5 0 0 1 0 11.5z" fill="#4ea6e0"/><rect x="0" y="3" width="15" height="10" rx="1.3" fill="url(#fg)"/></svg>
<div style="left:967.00px;top:762.23px;font-size:13.20px;line-height:13.20px;color:#e6e6e3;white-space:pre;letter-spacing:-0.538px;">REF_009</div>
<svg style="left:1176px;top:763px;" width="7" height="10" viewBox="0 0 7 10"><path d="M1.5 1.5L5 5 1.5 8.5" stroke="#8a887f" stroke-width="1.3" fill="none"/></svg>
<svg style="left:947px;top:783.5px;" width="15" height="13" viewBox="0 0 15 13"><defs><linearGradient id="fg" x1="0" y1="0" x2="0" y2="1"><stop offset="0" stop-color="#7fcaf5"/><stop offset="1" stop-color="#4fa9e6"/></linearGradient></defs><path d="M0 1.5A1.5 1.5 0 0 1 1.5 0h4l1.5 1.5h6.5A1.5 1.5 0 0 1 15 3v8.5a1.5 1.5 0 0 1-1.5 1.5h-12A1.5 1.5 0 0 1 0 11.5z" fill="#4ea6e0"/><rect x="0" y="3" width="15" height="10" rx="1.3" fill="url(#fg)"/></svg>
<div style="left:967.00px;top:784.23px;font-size:13.20px;line-height:13.20px;color:#e6e6e3;white-space:pre;letter-spacing:-0.710px;">REF_010</div>
<svg style="left:1176px;top:785px;" width="7" height="10" viewBox="0 0 7 10"><path d="M1.5 1.5L5 5 1.5 8.5" stroke="#e8e8e8" stroke-width="1.3" fill="none"/></svg>
<svg style="left:1215px;top:587px;" width="16" height="10" viewBox="0 0 16 10"><rect x="0.5" y="0.5" width="15" height="9" rx="2" fill="#efefef"/><rect x="3" y="3" width="5" height="3" rx="1" fill="#c9c9c9"/></svg>
<div style="left:1236.00px;top:586.23px;font-size:13.20px;line-height:13.20px;color:#e6e6e3;white-space:pre;letter-spacing:-0.309px;">REF_010_image_01.png</div>
<svg style="left:1215px;top:609px;" width="16" height="10" viewBox="0 0 16 10"><rect x="0.5" y="0.5" width="15" height="9" rx="2" fill="#efefef"/><rect x="3" y="3" width="5" height="3" rx="1" fill="#c9c9c9"/></svg>
<div style="left:1236.00px;top:608.23px;font-size:13.20px;line-height:13.20px;color:#e6e6e3;white-space:pre;letter-spacing:-0.189px;">REF_010_image_02.png</div>
<svg style="left:1215px;top:631px;" width="16" height="10" viewBox="0 0 16 10"><rect x="0.5" y="0.5" width="15" height="9" rx="2" fill="#efefef"/><rect x="3" y="3" width="5" height="3" rx="1" fill="#c9c9c9"/></svg>
<div style="left:1236.00px;top:630.23px;font-size:13.20px;line-height:13.20px;color:#e6e6e3;white-space:pre;letter-spacing:-0.189px;">REF_010_image_03.png</div>
<svg style="left:1215px;top:653px;" width="16" height="10" viewBox="0 0 16 10"><rect x="0.5" y="0.5" width="15" height="9" rx="2" fill="#efefef"/><rect x="3" y="3" width="5" height="3" rx="1" fill="#c9c9c9"/></svg>
<div style="left:1236.00px;top:652.23px;font-size:13.20px;line-height:13.20px;color:#e6e6e3;white-space:pre;letter-spacing:-0.189px;">REF_010_image_04.png</div>
<svg style="left:1215px;top:675px;" width="16" height="10" viewBox="0 0 16 10"><rect x="0.5" y="0.5" width="15" height="9" rx="2" fill="#efefef"/><rect x="3" y="3" width="5" height="3" rx="1" fill="#c9c9c9"/></svg>
<div style="left:1236.00px;top:674.23px;font-size:13.20px;line-height:13.20px;color:#e6e6e3;white-space:pre;letter-spacing:-0.189px;">REF_010_image_05.png</div>
<svg style="left:1215px;top:697px;" width="16" height="10" viewBox="0 0 16 10"><rect x="0.5" y="0.5" width="15" height="9" rx="2" fill="#efefef"/><rect x="3" y="3" width="5" height="3" rx="1" fill="#c9c9c9"/></svg>
<div style="left:1236.00px;top:696.23px;font-size:13.20px;line-height:13.20px;color:#e6e6e3;white-space:pre;letter-spacing:-0.189px;">REF_010_image_06.png</div>
<div style="left:361px;top:915px;width:1131px;height:1px;background:#3a382f;"></div>
<div style="left:361px;top:943px;width:1131px;height:1px;background:#131310;"></div>
<svg style="left:372px;top:922px;" width="14" height="14" viewBox="0 0 14 14"><rect x="0.5" y="0.5" width="13" height="13" rx="3" fill="#f4f4f4"/><path d="M5.5 3h3l3 5.5-1.5 2.5H4L2.5 8.5z" fill="none"/><path d="M5.3 3.2h3.4L5.9 8.1H2.5z" fill="#1fa463"/><path d="M8.7 3.2l3 5H8.2L5.6 3.6z" fill="#ffd04b"/><path d="M2.5 8.5h9l-1.6 2.5H4.1z" fill="#4688f4"/></svg>
<div style="left:390.00px;top:923.67px;font-size:12.20px;line-height:12.20px;color:#c9c8c2;white-space:pre;letter-spacing:-0.267px;">Google Drive</div>
<svg style="left:461.5px;top:925px;" width="6" height="9" viewBox="0 0 6 9"><path d="M1.2 1.5L4.5 4.5 1.2 7.5" stroke="#c9c8c2" stroke-width="1.2" fill="none"/></svg>
<svg style="left:474px;top:923.5px;" width="13" height="11" viewBox="0 0 13 11"><path d="M0 1.3A1.3 1.3 0 0 1 1.3 0h3.2l1.3 1.3h5.9A1.3 1.3 0 0 1 13 2.6v7.1A1.3 1.3 0 0 1 11.7 11H1.3A1.3 1.3 0 0 1 0 9.7z" fill="#5ab4ea"/><rect x="0" y="2.6" width="13" height="8.4" rx="1.1" fill="#75c4f2"/></svg>
<div style="left:491.00px;top:923.67px;font-size:12.20px;line-height:12.20px;color:#c9c8c2;white-space:pre;letter-spacing:-0.288px;">Mon Drive</div>
<svg style="left:548.5px;top:925px;" width="6" height="9" viewBox="0 0 6 9"><path d="M1.2 1.5L4.5 4.5 1.2 7.5" stroke="#c9c8c2" stroke-width="1.2" fill="none"/></svg>
<svg style="left:560.5px;top:923.5px;" width="13" height="11" viewBox="0 0 13 11"><path d="M0 1.3A1.3 1.3 0 0 1 1.3 0h3.2l1.3 1.3h5.9A1.3 1.3 0 0 1 13 2.6v7.1A1.3 1.3 0 0 1 11.7 11H1.3A1.3 1.3 0 0 1 0 9.7z" fill="#5ab4ea"/><rect x="0" y="2.6" width="13" height="8.4" rx="1.1" fill="#75c4f2"/></svg>
<div style="left:578.00px;top:923.67px;font-size:12.20px;line-height:12.20px;color:#c9c8c2;white-space:pre;letter-spacing:-0.018px;">*** tutoriel en ligne</div>
<svg style="left:682px;top:925px;" width="6" height="9" viewBox="0 0 6 9"><path d="M1.2 1.5L4.5 4.5 1.2 7.5" stroke="#c9c8c2" stroke-width="1.2" fill="none"/></svg>
<svg style="left:695px;top:923.5px;" width="13" height="11" viewBox="0 0 13 11"><path d="M0 1.3A1.3 1.3 0 0 1 1.3 0h3.2l1.3 1.3h5.9A1.3 1.3 0 0 1 13 2.6v7.1A1.3 1.3 0 0 1 11.7 11H1.3A1.3 1.3 0 0 1 0 9.7z" fill="#5ab4ea"/><rect x="0" y="2.6" width="13" height="8.4" rx="1.1" fill="#75c4f2"/></svg>
<div style="left:712.50px;top:923.67px;font-size:12.20px;line-height:12.20px;color:#c9c8c2;white-space:pre;letter-spacing:-1.121px;">MATE</div>
<svg style="left:745.5px;top:925px;" width="6" height="9" viewBox="0 0 6 9"><path d="M1.2 1.5L4.5 4.5 1.2 7.5" stroke="#c9c8c2" stroke-width="1.2" fill="none"/></svg>
<svg style="left:758px;top:923.5px;" width="13" height="11" viewBox="0 0 13 11"><path d="M0 1.3A1.3 1.3 0 0 1 1.3 0h3.2l1.3 1.3h5.9A1.3 1.3 0 0 1 13 2.6v7.1A1.3 1.3 0 0 1 11.7 11H1.3A1.3 1.3 0 0 1 0 9.7z" fill="#5ab4ea"/><rect x="0" y="2.6" width="13" height="8.4" rx="1.1" fill="#75c4f2"/></svg>
<div style="left:775.00px;top:923.67px;font-size:12.20px;line-height:12.20px;color:#c9c8c2;white-space:pre;letter-spacing:-0.382px;">mate2</div>
<svg style="left:811px;top:925px;" width="6" height="9" viewBox="0 0 6 9"><path d="M1.2 1.5L4.5 4.5 1.2 7.5" stroke="#c9c8c2" stroke-width="1.2" fill="none"/></svg>
<svg style="left:823px;top:923.5px;" width="13" height="11" viewBox="0 0 13 11"><path d="M0 1.3A1.3 1.3 0 0 1 1.3 0h3.2l1.3 1.3h5.9A1.3 1.3 0 0 1 13 2.6v7.1A1.3 1.3 0 0 1 11.7 11H1.3A1.3 1.3 0 0 1 0 9.7z" fill="#5ab4ea"/><rect x="0" y="2.6" width="13" height="8.4" rx="1.1" fill="#75c4f2"/></svg>
<div style="left:841.00px;top:923.67px;font-size:12.20px;line-height:12.20px;color:#c9c8c2;white-space:pre;letter-spacing:-0.336px;padding-bottom:5px;-webkit-mask-image:linear-gradient(90deg,#000 80%,transparent 100%);">campagne-reseaux-ex</div>
<svg style="left:959.5px;top:925px;" width="6" height="9" viewBox="0 0 6 9"><path d="M1.2 1.5L4.5 4.5 1.2 7.5" stroke="#c9c8c2" stroke-width="1.2" fill="none"/></svg>
<svg style="left:972px;top:923.5px;" width="13" height="11" viewBox="0 0 13 11"><path d="M0 1.3A1.3 1.3 0 0 1 1.3 0h3.2l1.3 1.3h5.9A1.3 1.3 0 0 1 13 2.6v7.1A1.3 1.3 0 0 1 11.7 11H1.3A1.3 1.3 0 0 1 0 9.7z" fill="#5ab4ea"/><rect x="0" y="2.6" width="13" height="8.4" rx="1.1" fill="#75c4f2"/></svg>
<div style="left:989.00px;top:923.67px;font-size:12.20px;line-height:12.20px;color:#c9c8c2;white-space:pre;letter-spacing:-0.357px;padding-bottom:5px;-webkit-mask-image:linear-gradient(90deg,#000 80%,transparent 100%);">nouvelle_campagne_p</div>
<svg style="left:1107px;top:925px;" width="6" height="9" viewBox="0 0 6 9"><path d="M1.2 1.5L4.5 4.5 1.2 7.5" stroke="#c9c8c2" stroke-width="1.2" fill="none"/></svg>
<svg style="left:1120px;top:923.5px;" width="13" height="11" viewBox="0 0 13 11"><path d="M0 1.3A1.3 1.3 0 0 1 1.3 0h3.2l1.3 1.3h5.9A1.3 1.3 0 0 1 13 2.6v7.1A1.3 1.3 0 0 1 11.7 11H1.3A1.3 1.3 0 0 1 0 9.7z" fill="#5ab4ea"/><rect x="0" y="2.6" width="13" height="8.4" rx="1.1" fill="#75c4f2"/></svg>
<div style="left:1137.00px;top:923.67px;font-size:12.20px;line-height:12.20px;color:#c9c8c2;white-space:pre;letter-spacing:-0.286px;padding-bottom:5px;-webkit-mask-image:linear-gradient(90deg,#000 80%,transparent 100%);">Masonry Catalog Stud</div>
<svg style="left:1255px;top:925px;" width="6" height="9" viewBox="0 0 6 9"><path d="M1.2 1.5L4.5 4.5 1.2 7.5" stroke="#c9c8c2" stroke-width="1.2" fill="none"/></svg>
<svg style="left:1268px;top:923.5px;" width="13" height="11" viewBox="0 0 13 11"><path d="M0 1.3A1.3 1.3 0 0 1 1.3 0h3.2l1.3 1.3h5.9A1.3 1.3 0 0 1 13 2.6v7.1A1.3 1.3 0 0 1 11.7 11H1.3A1.3 1.3 0 0 1 0 9.7z" fill="#5ab4ea"/><rect x="0" y="2.6" width="13" height="8.4" rx="1.1" fill="#75c4f2"/></svg>
<div style="left:1285.00px;top:923.67px;font-size:12.20px;line-height:12.20px;color:#c9c8c2;white-space:pre;letter-spacing:-0.281px;">links</div>
<svg style="left:1312px;top:925px;" width="6" height="9" viewBox="0 0 6 9"><path d="M1.2 1.5L4.5 4.5 1.2 7.5" stroke="#c9c8c2" stroke-width="1.2" fill="none"/></svg>
<svg style="left:1325px;top:923.5px;" width="13" height="11" viewBox="0 0 13 11"><path d="M0 1.3A1.3 1.3 0 0 1 1.3 0h3.2l1.3 1.3h5.9A1.3 1.3 0 0 1 13 2.6v7.1A1.3 1.3 0 0 1 11.7 11H1.3A1.3 1.3 0 0 1 0 9.7z" fill="#5ab4ea"/><rect x="0" y="2.6" width="13" height="8.4" rx="1.1" fill="#75c4f2"/></svg>
<div style="left:1342.00px;top:923.67px;font-size:12.20px;line-height:12.20px;color:#c9c8c2;white-space:pre;letter-spacing:-0.100px;">jeucomplet</div>
<svg style="left:1404px;top:925px;" width="6" height="9" viewBox="0 0 6 9"><path d="M1.2 1.5L4.5 4.5 1.2 7.5" stroke="#c9c8c2" stroke-width="1.2" fill="none"/></svg>
<svg style="left:1417px;top:923.5px;" width="13" height="11" viewBox="0 0 13 11"><path d="M0 1.3A1.3 1.3 0 0 1 1.3 0h3.2l1.3 1.3h5.9A1.3 1.3 0 0 1 13 2.6v7.1A1.3 1.3 0 0 1 11.7 11H1.3A1.3 1.3 0 0 1 0 9.7z" fill="#5ab4ea"/><rect x="0" y="2.6" width="13" height="8.4" rx="1.1" fill="#75c4f2"/></svg>
<div style="left:1434.00px;top:923.67px;font-size:12.20px;line-height:12.20px;color:#c9c8c2;white-space:pre;letter-spacing:-1.149px;">REF_010</div>
<div style="left:825.00px;top:951.17px;font-size:12.20px;line-height:12.20px;color:#b9b8b1;white-space:pre;letter-spacing:-0.114px;-webkit-text-stroke:0.2px #b9b8b1;">6 éléments, 290,33 Go disponible(s)</div>
<div style="left:0px;top:31px;width:1920px;height:1049px;border-radius:14px 14px 16px 16px;box-shadow:inset 0 1.2px 0 rgba(255,255,255,.22),inset 1.2px 0 0 rgba(255,255,255,.14),inset -1.2px 0 0 rgba(255,255,255,.14);pointer-events:none;"></div>
</body></html>
